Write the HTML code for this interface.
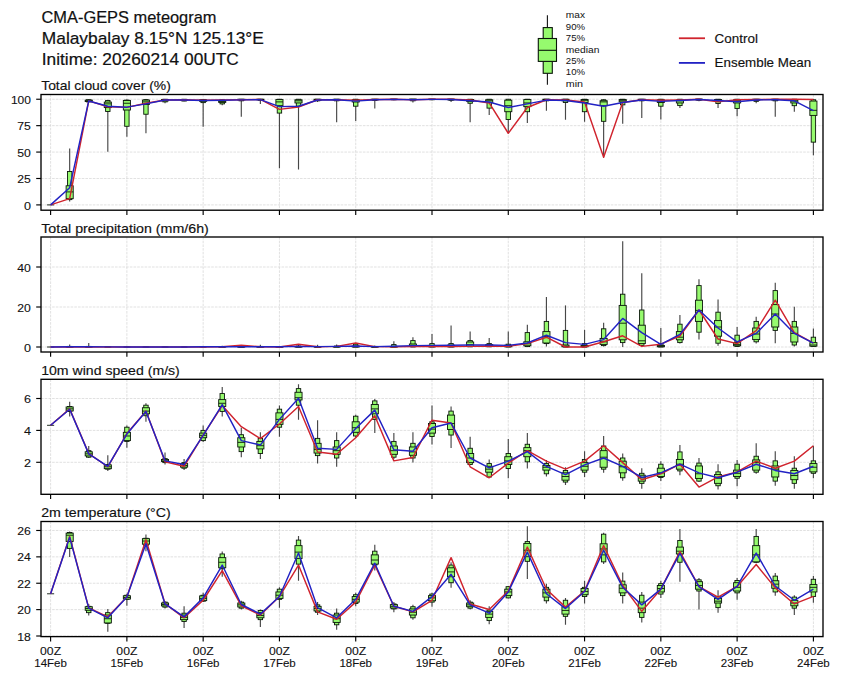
<!DOCTYPE html>
<html><head><meta charset="utf-8"><style>
html,body{margin:0;padding:0;background:#fff;}
svg{display:block;font-family:"Liberation Sans", sans-serif;}
</style></head><body>
<svg width="841" height="680" viewBox="0 0 841 680">
<rect width="841" height="680" fill="#fff"/>
<text x="41.5" y="22.9" font-size="16.1" text-anchor="start" fill="#111" stroke="#111" stroke-width="0.2" textLength="175" lengthAdjust="spacingAndGlyphs">CMA-GEPS meteogram</text>
<text x="41.8" y="43.7" font-size="16.1" text-anchor="start" fill="#111" stroke="#111" stroke-width="0.2" textLength="222" lengthAdjust="spacingAndGlyphs">Malaybalay 8.15°N 125.13°E</text>
<text x="41.8" y="64.7" font-size="16.1" text-anchor="start" fill="#111" stroke="#111" stroke-width="0.2" textLength="197" lengthAdjust="spacingAndGlyphs">Initime: 20260214 00UTC</text>
<line x1="547.4" y1="15.3" x2="547.4" y2="84.7" stroke="#111" stroke-width="1.1"/>
<rect x="543.2" y="27.6" width="9.1" height="45.7" fill="#96fa6e" stroke="#0a160a" stroke-width="1.1"/>
<rect x="538.3" y="38.5" width="18.2" height="22.9" fill="#96fa6e" stroke="#0a160a" stroke-width="1.1"/>
<line x1="538.3" y1="50.3" x2="556.5" y2="50.3" stroke="#0a160a" stroke-width="1.1"/>
<text x="565.8" y="18.4" font-size="9.3" text-anchor="start" fill="#111" textLength="19.2" lengthAdjust="spacingAndGlyphs">max</text>
<text x="565.8" y="29.78" font-size="9.3" text-anchor="start" fill="#111" textLength="19.2" lengthAdjust="spacingAndGlyphs">90%</text>
<text x="565.8" y="41.16" font-size="9.3" text-anchor="start" fill="#111" textLength="19.2" lengthAdjust="spacingAndGlyphs">75%</text>
<text x="565.8" y="52.54" font-size="9.3" text-anchor="start" fill="#111" textLength="33.6" lengthAdjust="spacingAndGlyphs">median</text>
<text x="565.8" y="63.92" font-size="9.3" text-anchor="start" fill="#111" textLength="19.2" lengthAdjust="spacingAndGlyphs">25%</text>
<text x="565.8" y="75.3" font-size="9.3" text-anchor="start" fill="#111" textLength="19.2" lengthAdjust="spacingAndGlyphs">10%</text>
<text x="565.8" y="86.68" font-size="9.3" text-anchor="start" fill="#111" textLength="17.3" lengthAdjust="spacingAndGlyphs">min</text>
<line x1="678.9" y1="38.25" x2="705" y2="38.25" stroke="#d0242e" stroke-width="1.8"/>
<line x1="678.9" y1="62.9" x2="705" y2="62.9" stroke="#2222c4" stroke-width="1.8"/>
<text x="714.6" y="42.6" font-size="13" text-anchor="start" fill="#111" stroke="#111" stroke-width="0.15" textLength="43.3" lengthAdjust="spacingAndGlyphs">Control</text>
<text x="714.6" y="66.9" font-size="13" text-anchor="start" fill="#111" stroke="#111" stroke-width="0.15" textLength="96.6" lengthAdjust="spacingAndGlyphs">Ensemble Mean</text>
<text x="41.2" y="89.8" font-size="12.9" text-anchor="start" fill="#111" stroke="#111" stroke-width="0.15" textLength="129.6" lengthAdjust="spacingAndGlyphs">Total cloud cover (%)</text>
<clipPath id="c94"><rect x="41" y="94.5" width="782" height="115.7"/></clipPath>
<g clip-path="url(#c94)">
<line x1="50.6" y1="94.5" x2="50.6" y2="210.2" stroke="#d4d4d4" stroke-width="0.7" stroke-dasharray="2.6,1.1"/>
<line x1="126.88" y1="94.5" x2="126.88" y2="210.2" stroke="#d4d4d4" stroke-width="0.7" stroke-dasharray="2.6,1.1"/>
<line x1="203.16" y1="94.5" x2="203.16" y2="210.2" stroke="#d4d4d4" stroke-width="0.7" stroke-dasharray="2.6,1.1"/>
<line x1="279.44" y1="94.5" x2="279.44" y2="210.2" stroke="#d4d4d4" stroke-width="0.7" stroke-dasharray="2.6,1.1"/>
<line x1="355.72" y1="94.5" x2="355.72" y2="210.2" stroke="#d4d4d4" stroke-width="0.7" stroke-dasharray="2.6,1.1"/>
<line x1="432" y1="94.5" x2="432" y2="210.2" stroke="#d4d4d4" stroke-width="0.7" stroke-dasharray="2.6,1.1"/>
<line x1="508.28" y1="94.5" x2="508.28" y2="210.2" stroke="#d4d4d4" stroke-width="0.7" stroke-dasharray="2.6,1.1"/>
<line x1="584.56" y1="94.5" x2="584.56" y2="210.2" stroke="#d4d4d4" stroke-width="0.7" stroke-dasharray="2.6,1.1"/>
<line x1="660.84" y1="94.5" x2="660.84" y2="210.2" stroke="#d4d4d4" stroke-width="0.7" stroke-dasharray="2.6,1.1"/>
<line x1="737.12" y1="94.5" x2="737.12" y2="210.2" stroke="#d4d4d4" stroke-width="0.7" stroke-dasharray="2.6,1.1"/>
<line x1="813.4" y1="94.5" x2="813.4" y2="210.2" stroke="#d4d4d4" stroke-width="0.7" stroke-dasharray="2.6,1.1"/>
<line x1="41" y1="204.9" x2="823" y2="204.9" stroke="#d4d4d4" stroke-width="0.7" stroke-dasharray="2.6,1.1"/>
<line x1="41" y1="178.49" x2="823" y2="178.49" stroke="#d4d4d4" stroke-width="0.7" stroke-dasharray="2.6,1.1"/>
<line x1="41" y1="152.07" x2="823" y2="152.07" stroke="#d4d4d4" stroke-width="0.7" stroke-dasharray="2.6,1.1"/>
<line x1="41" y1="125.66" x2="823" y2="125.66" stroke="#d4d4d4" stroke-width="0.7" stroke-dasharray="2.6,1.1"/>
<line x1="41" y1="99.24" x2="823" y2="99.24" stroke="#d4d4d4" stroke-width="0.7" stroke-dasharray="2.6,1.1"/>
<line x1="50.6" y1="204.9" x2="50.6" y2="204.9" stroke="#474747" stroke-width="1.15"/>
<rect x="48.4" y="204.9" width="4.4" height="0" fill="#96fa6e" stroke="#0a160a" stroke-width="0.9"/>
<rect x="47.05" y="204.9" width="7.1" height="0" fill="#96fa6e" stroke="#0a160a" stroke-width="0.9"/>
<line x1="47.05" y1="204.9" x2="54.15" y2="204.9" stroke="#0a160a" stroke-width="0.9"/>
<line x1="69.67" y1="148.58" x2="69.67" y2="201.52" stroke="#474747" stroke-width="1.15"/>
<rect x="67.47" y="171.51" width="4.4" height="28.11" fill="#96fa6e" stroke="#0a160a" stroke-width="0.9"/>
<rect x="66.12" y="185.78" width="7.1" height="12.89" fill="#96fa6e" stroke="#0a160a" stroke-width="0.9"/>
<line x1="66.12" y1="191.9" x2="73.22" y2="191.9" stroke="#0a160a" stroke-width="0.9"/>
<line x1="88.74" y1="99.24" x2="88.74" y2="102.41" stroke="#474747" stroke-width="1.15"/>
<rect x="86.54" y="99.77" width="4.4" height="2.11" fill="#96fa6e" stroke="#0a160a" stroke-width="0.9"/>
<rect x="85.19" y="100.09" width="7.1" height="1.48" fill="#96fa6e" stroke="#0a160a" stroke-width="0.9"/>
<line x1="85.19" y1="100.82" x2="92.29" y2="100.82" stroke="#0a160a" stroke-width="0.9"/>
<line x1="107.81" y1="99.77" x2="107.81" y2="151.65" stroke="#474747" stroke-width="1.15"/>
<rect x="105.61" y="100.51" width="4.4" height="10.99" fill="#96fa6e" stroke="#0a160a" stroke-width="0.9"/>
<rect x="104.26" y="102.09" width="7.1" height="5.49" fill="#96fa6e" stroke="#0a160a" stroke-width="0.9"/>
<line x1="104.26" y1="103.89" x2="111.36" y2="103.89" stroke="#0a160a" stroke-width="0.9"/>
<line x1="126.88" y1="99.56" x2="126.88" y2="136.64" stroke="#474747" stroke-width="1.15"/>
<rect x="124.68" y="100.09" width="4.4" height="26.2" fill="#96fa6e" stroke="#0a160a" stroke-width="0.9"/>
<rect x="123.33" y="100.51" width="7.1" height="9.51" fill="#96fa6e" stroke="#0a160a" stroke-width="0.9"/>
<line x1="123.33" y1="103.26" x2="130.43" y2="103.26" stroke="#0a160a" stroke-width="0.9"/>
<line x1="145.95" y1="99.24" x2="145.95" y2="133.37" stroke="#474747" stroke-width="1.15"/>
<rect x="143.75" y="99.66" width="4.4" height="14.58" fill="#96fa6e" stroke="#0a160a" stroke-width="0.9"/>
<rect x="142.4" y="100.09" width="7.1" height="4.33" fill="#96fa6e" stroke="#0a160a" stroke-width="0.9"/>
<line x1="142.4" y1="101.88" x2="149.5" y2="101.88" stroke="#0a160a" stroke-width="0.9"/>
<line x1="165.02" y1="99.24" x2="165.02" y2="103.26" stroke="#474747" stroke-width="1.15"/>
<rect x="162.82" y="99.24" width="4.4" height="2.64" fill="#96fa6e" stroke="#0a160a" stroke-width="0.9"/>
<rect x="161.47" y="99.56" width="7.1" height="1.27" fill="#96fa6e" stroke="#0a160a" stroke-width="0.9"/>
<line x1="161.47" y1="100.09" x2="168.57" y2="100.09" stroke="#0a160a" stroke-width="0.9"/>
<line x1="184.09" y1="99.24" x2="184.09" y2="101.35" stroke="#474747" stroke-width="1.15"/>
<rect x="181.89" y="99.24" width="4.4" height="1.8" fill="#96fa6e" stroke="#0a160a" stroke-width="0.9"/>
<rect x="180.54" y="99.45" width="7.1" height="0.85" fill="#96fa6e" stroke="#0a160a" stroke-width="0.9"/>
<line x1="180.54" y1="99.77" x2="187.64" y2="99.77" stroke="#0a160a" stroke-width="0.9"/>
<line x1="203.16" y1="99.24" x2="203.16" y2="126.82" stroke="#474747" stroke-width="1.15"/>
<rect x="200.96" y="99.45" width="4.4" height="3.17" fill="#96fa6e" stroke="#0a160a" stroke-width="0.9"/>
<rect x="199.61" y="99.77" width="7.1" height="1.58" fill="#96fa6e" stroke="#0a160a" stroke-width="0.9"/>
<line x1="199.61" y1="100.3" x2="206.71" y2="100.3" stroke="#0a160a" stroke-width="0.9"/>
<line x1="222.23" y1="99.24" x2="222.23" y2="105.26" stroke="#474747" stroke-width="1.15"/>
<rect x="220.03" y="99.77" width="4.4" height="4.12" fill="#96fa6e" stroke="#0a160a" stroke-width="0.9"/>
<rect x="218.68" y="100.93" width="7.1" height="1.48" fill="#96fa6e" stroke="#0a160a" stroke-width="0.9"/>
<line x1="218.68" y1="101.35" x2="225.78" y2="101.35" stroke="#0a160a" stroke-width="0.9"/>
<line x1="241.3" y1="99.24" x2="241.3" y2="116.78" stroke="#474747" stroke-width="1.15"/>
<rect x="239.1" y="99.24" width="4.4" height="1.58" fill="#96fa6e" stroke="#0a160a" stroke-width="0.9"/>
<rect x="237.75" y="99.24" width="7.1" height="0.74" fill="#96fa6e" stroke="#0a160a" stroke-width="0.9"/>
<line x1="237.75" y1="99.56" x2="244.85" y2="99.56" stroke="#0a160a" stroke-width="0.9"/>
<line x1="260.37" y1="99.24" x2="260.37" y2="103.89" stroke="#474747" stroke-width="1.15"/>
<rect x="258.17" y="99.24" width="4.4" height="1.06" fill="#96fa6e" stroke="#0a160a" stroke-width="0.9"/>
<rect x="256.82" y="99.24" width="7.1" height="0.53" fill="#96fa6e" stroke="#0a160a" stroke-width="0.9"/>
<line x1="256.82" y1="99.45" x2="263.92" y2="99.45" stroke="#0a160a" stroke-width="0.9"/>
<line x1="279.44" y1="99.24" x2="279.44" y2="168.24" stroke="#474747" stroke-width="1.15"/>
<rect x="277.24" y="99.24" width="4.4" height="13.84" fill="#96fa6e" stroke="#0a160a" stroke-width="0.9"/>
<rect x="275.89" y="99.56" width="7.1" height="6.13" fill="#96fa6e" stroke="#0a160a" stroke-width="0.9"/>
<line x1="275.89" y1="101.88" x2="282.99" y2="101.88" stroke="#0a160a" stroke-width="0.9"/>
<line x1="298.51" y1="99.24" x2="298.51" y2="169.61" stroke="#474747" stroke-width="1.15"/>
<rect x="296.31" y="99.24" width="4.4" height="6.97" fill="#96fa6e" stroke="#0a160a" stroke-width="0.9"/>
<rect x="294.96" y="99.77" width="7.1" height="3.17" fill="#96fa6e" stroke="#0a160a" stroke-width="0.9"/>
<line x1="294.96" y1="100.82" x2="302.06" y2="100.82" stroke="#0a160a" stroke-width="0.9"/>
<line x1="317.58" y1="99.24" x2="317.58" y2="101.99" stroke="#474747" stroke-width="1.15"/>
<rect x="315.38" y="99.24" width="4.4" height="1.58" fill="#96fa6e" stroke="#0a160a" stroke-width="0.9"/>
<rect x="314.03" y="99.24" width="7.1" height="1.06" fill="#96fa6e" stroke="#0a160a" stroke-width="0.9"/>
<line x1="314.03" y1="99.77" x2="321.13" y2="99.77" stroke="#0a160a" stroke-width="0.9"/>
<line x1="336.65" y1="99.24" x2="336.65" y2="122.27" stroke="#474747" stroke-width="1.15"/>
<rect x="334.45" y="99.24" width="4.4" height="1.58" fill="#96fa6e" stroke="#0a160a" stroke-width="0.9"/>
<rect x="333.1" y="99.24" width="7.1" height="0.85" fill="#96fa6e" stroke="#0a160a" stroke-width="0.9"/>
<line x1="333.1" y1="99.56" x2="340.2" y2="99.56" stroke="#0a160a" stroke-width="0.9"/>
<line x1="355.72" y1="99.24" x2="355.72" y2="121.01" stroke="#474747" stroke-width="1.15"/>
<rect x="353.52" y="99.24" width="4.4" height="6.97" fill="#96fa6e" stroke="#0a160a" stroke-width="0.9"/>
<rect x="352.17" y="99.77" width="7.1" height="2.22" fill="#96fa6e" stroke="#0a160a" stroke-width="0.9"/>
<line x1="352.17" y1="100.3" x2="359.27" y2="100.3" stroke="#0a160a" stroke-width="0.9"/>
<line x1="374.79" y1="99.24" x2="374.79" y2="108.43" stroke="#474747" stroke-width="1.15"/>
<rect x="372.59" y="99.24" width="4.4" height="1.27" fill="#96fa6e" stroke="#0a160a" stroke-width="0.9"/>
<rect x="371.24" y="99.24" width="7.1" height="0.63" fill="#96fa6e" stroke="#0a160a" stroke-width="0.9"/>
<line x1="371.24" y1="99.45" x2="378.34" y2="99.45" stroke="#0a160a" stroke-width="0.9"/>
<line x1="393.86" y1="99.24" x2="393.86" y2="100.3" stroke="#474747" stroke-width="1.15"/>
<rect x="391.66" y="99.24" width="4.4" height="0.53" fill="#96fa6e" stroke="#0a160a" stroke-width="0.9"/>
<rect x="390.31" y="99.24" width="7.1" height="0.21" fill="#96fa6e" stroke="#0a160a" stroke-width="0.9"/>
<line x1="390.31" y1="99.24" x2="397.41" y2="99.24" stroke="#0a160a" stroke-width="0.9"/>
<line x1="412.93" y1="99.24" x2="412.93" y2="102.41" stroke="#474747" stroke-width="1.15"/>
<rect x="410.73" y="99.24" width="4.4" height="1.58" fill="#96fa6e" stroke="#0a160a" stroke-width="0.9"/>
<rect x="409.38" y="99.24" width="7.1" height="0.53" fill="#96fa6e" stroke="#0a160a" stroke-width="0.9"/>
<line x1="409.38" y1="99.24" x2="416.48" y2="99.24" stroke="#0a160a" stroke-width="0.9"/>
<line x1="432" y1="99.24" x2="432" y2="100.3" stroke="#474747" stroke-width="1.15"/>
<rect x="429.8" y="99.24" width="4.4" height="0.53" fill="#96fa6e" stroke="#0a160a" stroke-width="0.9"/>
<rect x="428.45" y="99.24" width="7.1" height="0.21" fill="#96fa6e" stroke="#0a160a" stroke-width="0.9"/>
<line x1="428.45" y1="99.24" x2="435.55" y2="99.24" stroke="#0a160a" stroke-width="0.9"/>
<line x1="451.07" y1="99.24" x2="451.07" y2="101.88" stroke="#474747" stroke-width="1.15"/>
<rect x="448.87" y="99.24" width="4.4" height="1.06" fill="#96fa6e" stroke="#0a160a" stroke-width="0.9"/>
<rect x="447.52" y="99.24" width="7.1" height="0.53" fill="#96fa6e" stroke="#0a160a" stroke-width="0.9"/>
<line x1="447.52" y1="99.24" x2="454.62" y2="99.24" stroke="#0a160a" stroke-width="0.9"/>
<line x1="470.14" y1="99.24" x2="470.14" y2="122.27" stroke="#474747" stroke-width="1.15"/>
<rect x="467.94" y="99.24" width="4.4" height="4.02" fill="#96fa6e" stroke="#0a160a" stroke-width="0.9"/>
<rect x="466.59" y="99.45" width="7.1" height="1.9" fill="#96fa6e" stroke="#0a160a" stroke-width="0.9"/>
<line x1="466.59" y1="99.98" x2="473.69" y2="99.98" stroke="#0a160a" stroke-width="0.9"/>
<line x1="489.21" y1="99.24" x2="489.21" y2="114.88" stroke="#474747" stroke-width="1.15"/>
<rect x="487.01" y="99.24" width="4.4" height="8.88" fill="#96fa6e" stroke="#0a160a" stroke-width="0.9"/>
<rect x="485.66" y="99.77" width="7.1" height="2.75" fill="#96fa6e" stroke="#0a160a" stroke-width="0.9"/>
<line x1="485.66" y1="100.82" x2="492.76" y2="100.82" stroke="#0a160a" stroke-width="0.9"/>
<line x1="508.28" y1="99.24" x2="508.28" y2="133.26" stroke="#474747" stroke-width="1.15"/>
<rect x="506.08" y="99.24" width="4.4" height="20.29" fill="#96fa6e" stroke="#0a160a" stroke-width="0.9"/>
<rect x="504.73" y="100.19" width="7.1" height="11.52" fill="#96fa6e" stroke="#0a160a" stroke-width="0.9"/>
<line x1="504.73" y1="105.69" x2="511.83" y2="105.69" stroke="#0a160a" stroke-width="0.9"/>
<line x1="527.35" y1="99.24" x2="527.35" y2="123.12" stroke="#474747" stroke-width="1.15"/>
<rect x="525.15" y="99.24" width="4.4" height="12.47" fill="#96fa6e" stroke="#0a160a" stroke-width="0.9"/>
<rect x="523.8" y="99.56" width="7.1" height="7.08" fill="#96fa6e" stroke="#0a160a" stroke-width="0.9"/>
<line x1="523.8" y1="102.94" x2="530.9" y2="102.94" stroke="#0a160a" stroke-width="0.9"/>
<line x1="546.42" y1="99.24" x2="546.42" y2="110.65" stroke="#474747" stroke-width="1.15"/>
<rect x="544.22" y="99.24" width="4.4" height="1.58" fill="#96fa6e" stroke="#0a160a" stroke-width="0.9"/>
<rect x="542.87" y="99.24" width="7.1" height="0.74" fill="#96fa6e" stroke="#0a160a" stroke-width="0.9"/>
<line x1="542.87" y1="99.45" x2="549.97" y2="99.45" stroke="#0a160a" stroke-width="0.9"/>
<line x1="565.49" y1="99.24" x2="565.49" y2="119.84" stroke="#474747" stroke-width="1.15"/>
<rect x="563.29" y="99.24" width="4.4" height="3.28" fill="#96fa6e" stroke="#0a160a" stroke-width="0.9"/>
<rect x="561.94" y="99.24" width="7.1" height="1.58" fill="#96fa6e" stroke="#0a160a" stroke-width="0.9"/>
<line x1="561.94" y1="99.87" x2="569.04" y2="99.87" stroke="#0a160a" stroke-width="0.9"/>
<line x1="584.56" y1="99.24" x2="584.56" y2="121.75" stroke="#474747" stroke-width="1.15"/>
<rect x="582.36" y="99.24" width="4.4" height="12.47" fill="#96fa6e" stroke="#0a160a" stroke-width="0.9"/>
<rect x="581.01" y="99.56" width="7.1" height="2.85" fill="#96fa6e" stroke="#0a160a" stroke-width="0.9"/>
<line x1="581.01" y1="100.3" x2="588.11" y2="100.3" stroke="#0a160a" stroke-width="0.9"/>
<line x1="603.63" y1="99.24" x2="603.63" y2="157.25" stroke="#474747" stroke-width="1.15"/>
<rect x="601.43" y="99.77" width="4.4" height="21.55" fill="#96fa6e" stroke="#0a160a" stroke-width="0.9"/>
<rect x="600.08" y="100.72" width="7.1" height="4.97" fill="#96fa6e" stroke="#0a160a" stroke-width="0.9"/>
<line x1="600.08" y1="101.88" x2="607.18" y2="101.88" stroke="#0a160a" stroke-width="0.9"/>
<line x1="622.7" y1="99.24" x2="622.7" y2="123.75" stroke="#474747" stroke-width="1.15"/>
<rect x="620.5" y="99.24" width="4.4" height="5.6" fill="#96fa6e" stroke="#0a160a" stroke-width="0.9"/>
<rect x="619.15" y="99.56" width="7.1" height="2.32" fill="#96fa6e" stroke="#0a160a" stroke-width="0.9"/>
<line x1="619.15" y1="100.3" x2="626.25" y2="100.3" stroke="#0a160a" stroke-width="0.9"/>
<line x1="641.77" y1="99.24" x2="641.77" y2="118.05" stroke="#474747" stroke-width="1.15"/>
<rect x="639.57" y="99.24" width="4.4" height="1.58" fill="#96fa6e" stroke="#0a160a" stroke-width="0.9"/>
<rect x="638.22" y="99.24" width="7.1" height="0.74" fill="#96fa6e" stroke="#0a160a" stroke-width="0.9"/>
<line x1="638.22" y1="99.56" x2="645.32" y2="99.56" stroke="#0a160a" stroke-width="0.9"/>
<line x1="660.84" y1="99.24" x2="660.84" y2="119.53" stroke="#474747" stroke-width="1.15"/>
<rect x="658.64" y="99.24" width="4.4" height="6.97" fill="#96fa6e" stroke="#0a160a" stroke-width="0.9"/>
<rect x="657.29" y="99.77" width="7.1" height="2.75" fill="#96fa6e" stroke="#0a160a" stroke-width="0.9"/>
<line x1="657.29" y1="100.82" x2="664.39" y2="100.82" stroke="#0a160a" stroke-width="0.9"/>
<line x1="679.91" y1="99.24" x2="679.91" y2="107.9" stroke="#474747" stroke-width="1.15"/>
<rect x="677.71" y="99.24" width="4.4" height="6.34" fill="#96fa6e" stroke="#0a160a" stroke-width="0.9"/>
<rect x="676.36" y="99.98" width="7.1" height="2.96" fill="#96fa6e" stroke="#0a160a" stroke-width="0.9"/>
<line x1="676.36" y1="100.82" x2="683.46" y2="100.82" stroke="#0a160a" stroke-width="0.9"/>
<line x1="698.98" y1="99.24" x2="698.98" y2="101.35" stroke="#474747" stroke-width="1.15"/>
<rect x="696.78" y="99.24" width="4.4" height="1.06" fill="#96fa6e" stroke="#0a160a" stroke-width="0.9"/>
<rect x="695.43" y="99.24" width="7.1" height="0.53" fill="#96fa6e" stroke="#0a160a" stroke-width="0.9"/>
<line x1="695.43" y1="99.24" x2="702.53" y2="99.24" stroke="#0a160a" stroke-width="0.9"/>
<line x1="718.05" y1="99.24" x2="718.05" y2="107.9" stroke="#474747" stroke-width="1.15"/>
<rect x="715.85" y="99.24" width="4.4" height="4.23" fill="#96fa6e" stroke="#0a160a" stroke-width="0.9"/>
<rect x="714.5" y="99.56" width="7.1" height="1.8" fill="#96fa6e" stroke="#0a160a" stroke-width="0.9"/>
<line x1="714.5" y1="100.09" x2="721.6" y2="100.09" stroke="#0a160a" stroke-width="0.9"/>
<line x1="737.12" y1="99.24" x2="737.12" y2="116.15" stroke="#474747" stroke-width="1.15"/>
<rect x="734.92" y="99.24" width="4.4" height="9.19" fill="#96fa6e" stroke="#0a160a" stroke-width="0.9"/>
<rect x="733.57" y="99.77" width="7.1" height="3.17" fill="#96fa6e" stroke="#0a160a" stroke-width="0.9"/>
<line x1="733.57" y1="100.82" x2="740.67" y2="100.82" stroke="#0a160a" stroke-width="0.9"/>
<line x1="756.19" y1="99.24" x2="756.19" y2="103.26" stroke="#474747" stroke-width="1.15"/>
<rect x="753.99" y="99.24" width="4.4" height="2.11" fill="#96fa6e" stroke="#0a160a" stroke-width="0.9"/>
<rect x="752.64" y="99.24" width="7.1" height="1.06" fill="#96fa6e" stroke="#0a160a" stroke-width="0.9"/>
<line x1="752.64" y1="99.77" x2="759.74" y2="99.77" stroke="#0a160a" stroke-width="0.9"/>
<line x1="775.26" y1="99.24" x2="775.26" y2="116.78" stroke="#474747" stroke-width="1.15"/>
<rect x="773.06" y="99.24" width="4.4" height="1.58" fill="#96fa6e" stroke="#0a160a" stroke-width="0.9"/>
<rect x="771.71" y="99.24" width="7.1" height="0.74" fill="#96fa6e" stroke="#0a160a" stroke-width="0.9"/>
<line x1="771.71" y1="99.45" x2="778.81" y2="99.45" stroke="#0a160a" stroke-width="0.9"/>
<line x1="794.33" y1="99.24" x2="794.33" y2="111.71" stroke="#474747" stroke-width="1.15"/>
<rect x="792.13" y="99.24" width="4.4" height="6.45" fill="#96fa6e" stroke="#0a160a" stroke-width="0.9"/>
<rect x="790.78" y="99.98" width="7.1" height="2.96" fill="#96fa6e" stroke="#0a160a" stroke-width="0.9"/>
<line x1="790.78" y1="101.04" x2="797.88" y2="101.04" stroke="#0a160a" stroke-width="0.9"/>
<line x1="813.4" y1="99.24" x2="813.4" y2="155.35" stroke="#474747" stroke-width="1.15"/>
<rect x="811.2" y="99.77" width="4.4" height="42.37" fill="#96fa6e" stroke="#0a160a" stroke-width="0.9"/>
<rect x="809.85" y="101.04" width="7.1" height="14.37" fill="#96fa6e" stroke="#0a160a" stroke-width="0.9"/>
<line x1="809.85" y1="110.33" x2="816.95" y2="110.33" stroke="#0a160a" stroke-width="0.9"/>
<polyline points="50.6,204.9 69.67,198.67 88.74,100.93 107.81,106.74 126.88,107.38 145.95,103.26 165.02,99.98 184.09,99.77 203.16,100.3 222.23,100.09 241.3,99.66 260.37,99.45 279.44,109.38 298.51,106.95 317.58,99.77 336.65,99.66 355.72,100.3 374.79,99.45 393.86,99.24 412.93,99.77 432,99.24 451.07,99.24 470.14,99.98 489.21,102.94 508.28,133.26 527.35,107.48 546.42,99.77 565.49,99.98 584.56,101.99 603.63,157.25 622.7,102.52 641.77,99.77 660.84,100.3 679.91,99.98 698.98,99.24 718.05,101.88 737.12,99.77 756.19,99.56 775.26,99.24 794.33,99.24 813.4,99.56" fill="none" stroke="#d0242e" stroke-width="1.45" stroke-linejoin="round"/>
<polyline points="50.6,204.9 69.67,187.68 88.74,100.93 107.81,106.21 126.88,107.16 145.95,103.89 165.02,99.98 184.09,99.98 203.16,100.51 222.23,100.3 241.3,99.87 260.37,99.66 279.44,106.64 298.51,106.21 317.58,99.98 336.65,99.77 355.72,101.14 374.79,99.66 393.86,99.35 412.93,99.66 432,99.35 451.07,99.45 470.14,100.72 489.21,101.99 508.28,107.48 527.35,103.89 546.42,100.09 565.49,100.51 584.56,102.94 603.63,106.21 622.7,102.52 641.77,100.09 660.84,101.35 679.91,100.51 698.98,99.45 718.05,100.51 737.12,101.78 756.19,99.98 775.26,99.66 794.33,100.82 813.4,110.65" fill="none" stroke="#2222c4" stroke-width="1.45" stroke-linejoin="round"/>
</g>
<rect x="41" y="94.5" width="782" height="115.7" fill="none" stroke="#000" stroke-width="1.35"/>
<line x1="36.2" y1="204.9" x2="41" y2="204.9" stroke="#000" stroke-width="1.15"/>
<text x="30.9" y="209.5" font-size="11.6" text-anchor="end" fill="#111" stroke="#111" stroke-width="0.1" textLength="7" lengthAdjust="spacingAndGlyphs">0</text>
<line x1="36.2" y1="178.49" x2="41" y2="178.49" stroke="#000" stroke-width="1.15"/>
<text x="30.9" y="183.09" font-size="11.6" text-anchor="end" fill="#111" stroke="#111" stroke-width="0.1" textLength="13.6" lengthAdjust="spacingAndGlyphs">25</text>
<line x1="36.2" y1="152.07" x2="41" y2="152.07" stroke="#000" stroke-width="1.15"/>
<text x="30.9" y="156.67" font-size="11.6" text-anchor="end" fill="#111" stroke="#111" stroke-width="0.1" textLength="13.6" lengthAdjust="spacingAndGlyphs">50</text>
<line x1="36.2" y1="125.66" x2="41" y2="125.66" stroke="#000" stroke-width="1.15"/>
<text x="30.9" y="130.25" font-size="11.6" text-anchor="end" fill="#111" stroke="#111" stroke-width="0.1" textLength="13.6" lengthAdjust="spacingAndGlyphs">75</text>
<line x1="36.2" y1="99.24" x2="41" y2="99.24" stroke="#000" stroke-width="1.15"/>
<text x="30.9" y="103.84" font-size="11.6" text-anchor="end" fill="#111" stroke="#111" stroke-width="0.1" textLength="20" lengthAdjust="spacingAndGlyphs">100</text>
<line x1="50.6" y1="210.2" x2="50.6" y2="215" stroke="#000" stroke-width="1.15"/>
<line x1="126.88" y1="210.2" x2="126.88" y2="215" stroke="#000" stroke-width="1.15"/>
<line x1="203.16" y1="210.2" x2="203.16" y2="215" stroke="#000" stroke-width="1.15"/>
<line x1="279.44" y1="210.2" x2="279.44" y2="215" stroke="#000" stroke-width="1.15"/>
<line x1="355.72" y1="210.2" x2="355.72" y2="215" stroke="#000" stroke-width="1.15"/>
<line x1="432" y1="210.2" x2="432" y2="215" stroke="#000" stroke-width="1.15"/>
<line x1="508.28" y1="210.2" x2="508.28" y2="215" stroke="#000" stroke-width="1.15"/>
<line x1="584.56" y1="210.2" x2="584.56" y2="215" stroke="#000" stroke-width="1.15"/>
<line x1="660.84" y1="210.2" x2="660.84" y2="215" stroke="#000" stroke-width="1.15"/>
<line x1="737.12" y1="210.2" x2="737.12" y2="215" stroke="#000" stroke-width="1.15"/>
<line x1="813.4" y1="210.2" x2="813.4" y2="215" stroke="#000" stroke-width="1.15"/>
<text x="41.2" y="232.6" font-size="12.9" text-anchor="start" fill="#111" stroke="#111" stroke-width="0.15" textLength="167.6" lengthAdjust="spacingAndGlyphs">Total precipitation (mm/6h)</text>
<clipPath id="c237"><rect x="41" y="237" width="782" height="115"/></clipPath>
<g clip-path="url(#c237)">
<line x1="50.6" y1="237" x2="50.6" y2="352" stroke="#d4d4d4" stroke-width="0.7" stroke-dasharray="2.6,1.1"/>
<line x1="126.88" y1="237" x2="126.88" y2="352" stroke="#d4d4d4" stroke-width="0.7" stroke-dasharray="2.6,1.1"/>
<line x1="203.16" y1="237" x2="203.16" y2="352" stroke="#d4d4d4" stroke-width="0.7" stroke-dasharray="2.6,1.1"/>
<line x1="279.44" y1="237" x2="279.44" y2="352" stroke="#d4d4d4" stroke-width="0.7" stroke-dasharray="2.6,1.1"/>
<line x1="355.72" y1="237" x2="355.72" y2="352" stroke="#d4d4d4" stroke-width="0.7" stroke-dasharray="2.6,1.1"/>
<line x1="432" y1="237" x2="432" y2="352" stroke="#d4d4d4" stroke-width="0.7" stroke-dasharray="2.6,1.1"/>
<line x1="508.28" y1="237" x2="508.28" y2="352" stroke="#d4d4d4" stroke-width="0.7" stroke-dasharray="2.6,1.1"/>
<line x1="584.56" y1="237" x2="584.56" y2="352" stroke="#d4d4d4" stroke-width="0.7" stroke-dasharray="2.6,1.1"/>
<line x1="660.84" y1="237" x2="660.84" y2="352" stroke="#d4d4d4" stroke-width="0.7" stroke-dasharray="2.6,1.1"/>
<line x1="737.12" y1="237" x2="737.12" y2="352" stroke="#d4d4d4" stroke-width="0.7" stroke-dasharray="2.6,1.1"/>
<line x1="813.4" y1="237" x2="813.4" y2="352" stroke="#d4d4d4" stroke-width="0.7" stroke-dasharray="2.6,1.1"/>
<line x1="41" y1="347" x2="823" y2="347" stroke="#d4d4d4" stroke-width="0.7" stroke-dasharray="2.6,1.1"/>
<line x1="41" y1="307" x2="823" y2="307" stroke="#d4d4d4" stroke-width="0.7" stroke-dasharray="2.6,1.1"/>
<line x1="41" y1="267" x2="823" y2="267" stroke="#d4d4d4" stroke-width="0.7" stroke-dasharray="2.6,1.1"/>
<line x1="50.6" y1="347" x2="50.6" y2="347" stroke="#474747" stroke-width="1.15"/>
<rect x="48.4" y="347" width="4.4" height="0" fill="#96fa6e" stroke="#0a160a" stroke-width="0.9"/>
<rect x="47.05" y="347" width="7.1" height="0" fill="#96fa6e" stroke="#0a160a" stroke-width="0.9"/>
<line x1="47.05" y1="347" x2="54.15" y2="347" stroke="#0a160a" stroke-width="0.9"/>
<line x1="69.67" y1="344.5" x2="69.67" y2="347" stroke="#474747" stroke-width="1.15"/>
<rect x="67.47" y="346.4" width="4.4" height="0.6" fill="#96fa6e" stroke="#0a160a" stroke-width="0.9"/>
<rect x="66.12" y="346.8" width="7.1" height="0.2" fill="#96fa6e" stroke="#0a160a" stroke-width="0.9"/>
<line x1="66.12" y1="347" x2="73.22" y2="347" stroke="#0a160a" stroke-width="0.9"/>
<line x1="88.74" y1="343" x2="88.74" y2="347" stroke="#474747" stroke-width="1.15"/>
<rect x="86.54" y="346.4" width="4.4" height="0.6" fill="#96fa6e" stroke="#0a160a" stroke-width="0.9"/>
<rect x="85.19" y="346.8" width="7.1" height="0.2" fill="#96fa6e" stroke="#0a160a" stroke-width="0.9"/>
<line x1="85.19" y1="347" x2="92.29" y2="347" stroke="#0a160a" stroke-width="0.9"/>
<line x1="107.81" y1="346.4" x2="107.81" y2="347" stroke="#474747" stroke-width="1.15"/>
<rect x="105.61" y="346.8" width="4.4" height="0.2" fill="#96fa6e" stroke="#0a160a" stroke-width="0.9"/>
<rect x="104.26" y="347" width="7.1" height="0" fill="#96fa6e" stroke="#0a160a" stroke-width="0.9"/>
<line x1="104.26" y1="347" x2="111.36" y2="347" stroke="#0a160a" stroke-width="0.9"/>
<line x1="126.88" y1="346.4" x2="126.88" y2="347" stroke="#474747" stroke-width="1.15"/>
<rect x="124.68" y="346.8" width="4.4" height="0.2" fill="#96fa6e" stroke="#0a160a" stroke-width="0.9"/>
<rect x="123.33" y="347" width="7.1" height="0" fill="#96fa6e" stroke="#0a160a" stroke-width="0.9"/>
<line x1="123.33" y1="347" x2="130.43" y2="347" stroke="#0a160a" stroke-width="0.9"/>
<line x1="145.95" y1="346.4" x2="145.95" y2="347" stroke="#474747" stroke-width="1.15"/>
<rect x="143.75" y="346.8" width="4.4" height="0.2" fill="#96fa6e" stroke="#0a160a" stroke-width="0.9"/>
<rect x="142.4" y="347" width="7.1" height="0" fill="#96fa6e" stroke="#0a160a" stroke-width="0.9"/>
<line x1="142.4" y1="347" x2="149.5" y2="347" stroke="#0a160a" stroke-width="0.9"/>
<line x1="165.02" y1="346.2" x2="165.02" y2="347" stroke="#474747" stroke-width="1.15"/>
<rect x="162.82" y="346.8" width="4.4" height="0.2" fill="#96fa6e" stroke="#0a160a" stroke-width="0.9"/>
<rect x="161.47" y="347" width="7.1" height="0" fill="#96fa6e" stroke="#0a160a" stroke-width="0.9"/>
<line x1="161.47" y1="347" x2="168.57" y2="347" stroke="#0a160a" stroke-width="0.9"/>
<line x1="184.09" y1="346.4" x2="184.09" y2="347" stroke="#474747" stroke-width="1.15"/>
<rect x="181.89" y="346.8" width="4.4" height="0.2" fill="#96fa6e" stroke="#0a160a" stroke-width="0.9"/>
<rect x="180.54" y="347" width="7.1" height="0" fill="#96fa6e" stroke="#0a160a" stroke-width="0.9"/>
<line x1="180.54" y1="347" x2="187.64" y2="347" stroke="#0a160a" stroke-width="0.9"/>
<line x1="203.16" y1="346" x2="203.16" y2="347" stroke="#474747" stroke-width="1.15"/>
<rect x="200.96" y="346.8" width="4.4" height="0.2" fill="#96fa6e" stroke="#0a160a" stroke-width="0.9"/>
<rect x="199.61" y="347" width="7.1" height="0" fill="#96fa6e" stroke="#0a160a" stroke-width="0.9"/>
<line x1="199.61" y1="347" x2="206.71" y2="347" stroke="#0a160a" stroke-width="0.9"/>
<line x1="222.23" y1="345.8" x2="222.23" y2="347" stroke="#474747" stroke-width="1.15"/>
<rect x="220.03" y="346.6" width="4.4" height="0.4" fill="#96fa6e" stroke="#0a160a" stroke-width="0.9"/>
<rect x="218.68" y="346.8" width="7.1" height="0.2" fill="#96fa6e" stroke="#0a160a" stroke-width="0.9"/>
<line x1="218.68" y1="347" x2="225.78" y2="347" stroke="#0a160a" stroke-width="0.9"/>
<line x1="241.3" y1="345.8" x2="241.3" y2="347" stroke="#474747" stroke-width="1.15"/>
<rect x="239.1" y="346.6" width="4.4" height="0.4" fill="#96fa6e" stroke="#0a160a" stroke-width="0.9"/>
<rect x="237.75" y="346.8" width="7.1" height="0.2" fill="#96fa6e" stroke="#0a160a" stroke-width="0.9"/>
<line x1="237.75" y1="347" x2="244.85" y2="347" stroke="#0a160a" stroke-width="0.9"/>
<line x1="260.37" y1="344.8" x2="260.37" y2="347" stroke="#474747" stroke-width="1.15"/>
<rect x="258.17" y="346.4" width="4.4" height="0.6" fill="#96fa6e" stroke="#0a160a" stroke-width="0.9"/>
<rect x="256.82" y="346.8" width="7.1" height="0.2" fill="#96fa6e" stroke="#0a160a" stroke-width="0.9"/>
<line x1="256.82" y1="347" x2="263.92" y2="347" stroke="#0a160a" stroke-width="0.9"/>
<line x1="279.44" y1="346" x2="279.44" y2="347" stroke="#474747" stroke-width="1.15"/>
<rect x="277.24" y="346.6" width="4.4" height="0.4" fill="#96fa6e" stroke="#0a160a" stroke-width="0.9"/>
<rect x="275.89" y="346.8" width="7.1" height="0.2" fill="#96fa6e" stroke="#0a160a" stroke-width="0.9"/>
<line x1="275.89" y1="347" x2="282.99" y2="347" stroke="#0a160a" stroke-width="0.9"/>
<line x1="298.51" y1="344" x2="298.51" y2="347" stroke="#474747" stroke-width="1.15"/>
<rect x="296.31" y="346" width="4.4" height="1" fill="#96fa6e" stroke="#0a160a" stroke-width="0.9"/>
<rect x="294.96" y="346.6" width="7.1" height="0.4" fill="#96fa6e" stroke="#0a160a" stroke-width="0.9"/>
<line x1="294.96" y1="346.8" x2="302.06" y2="346.8" stroke="#0a160a" stroke-width="0.9"/>
<line x1="317.58" y1="344.8" x2="317.58" y2="347" stroke="#474747" stroke-width="1.15"/>
<rect x="315.38" y="346.4" width="4.4" height="0.6" fill="#96fa6e" stroke="#0a160a" stroke-width="0.9"/>
<rect x="314.03" y="346.8" width="7.1" height="0.2" fill="#96fa6e" stroke="#0a160a" stroke-width="0.9"/>
<line x1="314.03" y1="347" x2="321.13" y2="347" stroke="#0a160a" stroke-width="0.9"/>
<line x1="336.65" y1="344.4" x2="336.65" y2="347" stroke="#474747" stroke-width="1.15"/>
<rect x="334.45" y="346" width="4.4" height="1" fill="#96fa6e" stroke="#0a160a" stroke-width="0.9"/>
<rect x="333.1" y="346.6" width="7.1" height="0.4" fill="#96fa6e" stroke="#0a160a" stroke-width="0.9"/>
<line x1="333.1" y1="346.8" x2="340.2" y2="346.8" stroke="#0a160a" stroke-width="0.9"/>
<line x1="355.72" y1="343" x2="355.72" y2="347" stroke="#474747" stroke-width="1.15"/>
<rect x="353.52" y="344.2" width="4.4" height="2.8" fill="#96fa6e" stroke="#0a160a" stroke-width="0.9"/>
<rect x="352.17" y="346" width="7.1" height="1" fill="#96fa6e" stroke="#0a160a" stroke-width="0.9"/>
<line x1="352.17" y1="346.6" x2="359.27" y2="346.6" stroke="#0a160a" stroke-width="0.9"/>
<line x1="374.79" y1="345.4" x2="374.79" y2="347" stroke="#474747" stroke-width="1.15"/>
<rect x="372.59" y="346.4" width="4.4" height="0.6" fill="#96fa6e" stroke="#0a160a" stroke-width="0.9"/>
<rect x="371.24" y="346.8" width="7.1" height="0.2" fill="#96fa6e" stroke="#0a160a" stroke-width="0.9"/>
<line x1="371.24" y1="347" x2="378.34" y2="347" stroke="#0a160a" stroke-width="0.9"/>
<line x1="393.86" y1="341.2" x2="393.86" y2="347" stroke="#474747" stroke-width="1.15"/>
<rect x="391.66" y="344.6" width="4.4" height="2.4" fill="#96fa6e" stroke="#0a160a" stroke-width="0.9"/>
<rect x="390.31" y="346.4" width="7.1" height="0.6" fill="#96fa6e" stroke="#0a160a" stroke-width="0.9"/>
<line x1="390.31" y1="346.8" x2="397.41" y2="346.8" stroke="#0a160a" stroke-width="0.9"/>
<line x1="412.93" y1="337.2" x2="412.93" y2="347" stroke="#474747" stroke-width="1.15"/>
<rect x="410.73" y="340.6" width="4.4" height="6.4" fill="#96fa6e" stroke="#0a160a" stroke-width="0.9"/>
<rect x="409.38" y="344" width="7.1" height="2.4" fill="#96fa6e" stroke="#0a160a" stroke-width="0.9"/>
<line x1="409.38" y1="345.4" x2="416.48" y2="345.4" stroke="#0a160a" stroke-width="0.9"/>
<line x1="432" y1="334" x2="432" y2="347" stroke="#474747" stroke-width="1.15"/>
<rect x="429.8" y="343.6" width="4.4" height="3.4" fill="#96fa6e" stroke="#0a160a" stroke-width="0.9"/>
<rect x="428.45" y="345.4" width="7.1" height="1.4" fill="#96fa6e" stroke="#0a160a" stroke-width="0.9"/>
<line x1="428.45" y1="346.4" x2="435.55" y2="346.4" stroke="#0a160a" stroke-width="0.9"/>
<line x1="451.07" y1="325.6" x2="451.07" y2="347" stroke="#474747" stroke-width="1.15"/>
<rect x="448.87" y="343.6" width="4.4" height="3.4" fill="#96fa6e" stroke="#0a160a" stroke-width="0.9"/>
<rect x="447.52" y="345.2" width="7.1" height="1.6" fill="#96fa6e" stroke="#0a160a" stroke-width="0.9"/>
<line x1="447.52" y1="346.2" x2="454.62" y2="346.2" stroke="#0a160a" stroke-width="0.9"/>
<line x1="470.14" y1="331.4" x2="470.14" y2="347" stroke="#474747" stroke-width="1.15"/>
<rect x="467.94" y="340.6" width="4.4" height="6.2" fill="#96fa6e" stroke="#0a160a" stroke-width="0.9"/>
<rect x="466.59" y="342" width="7.1" height="4.4" fill="#96fa6e" stroke="#0a160a" stroke-width="0.9"/>
<line x1="466.59" y1="344.6" x2="473.69" y2="344.6" stroke="#0a160a" stroke-width="0.9"/>
<line x1="489.21" y1="338" x2="489.21" y2="347" stroke="#474747" stroke-width="1.15"/>
<rect x="487.01" y="343.6" width="4.4" height="3.2" fill="#96fa6e" stroke="#0a160a" stroke-width="0.9"/>
<rect x="485.66" y="344.6" width="7.1" height="1.8" fill="#96fa6e" stroke="#0a160a" stroke-width="0.9"/>
<line x1="485.66" y1="345.8" x2="492.76" y2="345.8" stroke="#0a160a" stroke-width="0.9"/>
<line x1="508.28" y1="331.6" x2="508.28" y2="347" stroke="#474747" stroke-width="1.15"/>
<rect x="506.08" y="344.2" width="4.4" height="2.8" fill="#96fa6e" stroke="#0a160a" stroke-width="0.9"/>
<rect x="504.73" y="345.2" width="7.1" height="1.6" fill="#96fa6e" stroke="#0a160a" stroke-width="0.9"/>
<line x1="504.73" y1="346.2" x2="511.83" y2="346.2" stroke="#0a160a" stroke-width="0.9"/>
<line x1="527.35" y1="324.8" x2="527.35" y2="347" stroke="#474747" stroke-width="1.15"/>
<rect x="525.15" y="332.6" width="4.4" height="14" fill="#96fa6e" stroke="#0a160a" stroke-width="0.9"/>
<rect x="523.8" y="341.8" width="7.1" height="4" fill="#96fa6e" stroke="#0a160a" stroke-width="0.9"/>
<line x1="523.8" y1="343.8" x2="530.9" y2="343.8" stroke="#0a160a" stroke-width="0.9"/>
<line x1="546.42" y1="297" x2="546.42" y2="346.4" stroke="#474747" stroke-width="1.15"/>
<rect x="544.22" y="321.4" width="4.4" height="22.2" fill="#96fa6e" stroke="#0a160a" stroke-width="0.9"/>
<rect x="542.87" y="331.6" width="7.1" height="11.4" fill="#96fa6e" stroke="#0a160a" stroke-width="0.9"/>
<line x1="542.87" y1="336.6" x2="549.97" y2="336.6" stroke="#0a160a" stroke-width="0.9"/>
<line x1="565.49" y1="305.4" x2="565.49" y2="347" stroke="#474747" stroke-width="1.15"/>
<rect x="563.29" y="330.4" width="4.4" height="16.6" fill="#96fa6e" stroke="#0a160a" stroke-width="0.9"/>
<rect x="561.94" y="345" width="7.1" height="1.8" fill="#96fa6e" stroke="#0a160a" stroke-width="0.9"/>
<line x1="561.94" y1="346.2" x2="569.04" y2="346.2" stroke="#0a160a" stroke-width="0.9"/>
<line x1="584.56" y1="329.8" x2="584.56" y2="347" stroke="#474747" stroke-width="1.15"/>
<rect x="582.36" y="343.6" width="4.4" height="3.4" fill="#96fa6e" stroke="#0a160a" stroke-width="0.9"/>
<rect x="581.01" y="345.4" width="7.1" height="1.4" fill="#96fa6e" stroke="#0a160a" stroke-width="0.9"/>
<line x1="581.01" y1="346.4" x2="588.11" y2="346.4" stroke="#0a160a" stroke-width="0.9"/>
<line x1="603.63" y1="322.8" x2="603.63" y2="346.6" stroke="#474747" stroke-width="1.15"/>
<rect x="601.43" y="328.8" width="4.4" height="16.8" fill="#96fa6e" stroke="#0a160a" stroke-width="0.9"/>
<rect x="600.08" y="338.4" width="7.1" height="6" fill="#96fa6e" stroke="#0a160a" stroke-width="0.9"/>
<line x1="600.08" y1="341.8" x2="607.18" y2="341.8" stroke="#0a160a" stroke-width="0.9"/>
<line x1="622.7" y1="241.2" x2="622.7" y2="347" stroke="#474747" stroke-width="1.15"/>
<rect x="620.5" y="294.2" width="4.4" height="48.4" fill="#96fa6e" stroke="#0a160a" stroke-width="0.9"/>
<rect x="619.15" y="305.4" width="7.1" height="34.4" fill="#96fa6e" stroke="#0a160a" stroke-width="0.9"/>
<line x1="619.15" y1="323.2" x2="626.25" y2="323.2" stroke="#0a160a" stroke-width="0.9"/>
<line x1="641.77" y1="273.2" x2="641.77" y2="346" stroke="#474747" stroke-width="1.15"/>
<rect x="639.57" y="310" width="4.4" height="35.4" fill="#96fa6e" stroke="#0a160a" stroke-width="0.9"/>
<rect x="638.22" y="325.2" width="7.1" height="18.4" fill="#96fa6e" stroke="#0a160a" stroke-width="0.9"/>
<line x1="638.22" y1="340.8" x2="645.32" y2="340.8" stroke="#0a160a" stroke-width="0.9"/>
<line x1="660.84" y1="328" x2="660.84" y2="347" stroke="#474747" stroke-width="1.15"/>
<rect x="658.64" y="343.6" width="4.4" height="3.4" fill="#96fa6e" stroke="#0a160a" stroke-width="0.9"/>
<rect x="657.29" y="345.4" width="7.1" height="1.4" fill="#96fa6e" stroke="#0a160a" stroke-width="0.9"/>
<line x1="657.29" y1="346.2" x2="664.39" y2="346.2" stroke="#0a160a" stroke-width="0.9"/>
<line x1="679.91" y1="315" x2="679.91" y2="343.4" stroke="#474747" stroke-width="1.15"/>
<rect x="677.71" y="324.2" width="4.4" height="18.4" fill="#96fa6e" stroke="#0a160a" stroke-width="0.9"/>
<rect x="676.36" y="331.6" width="7.1" height="8.2" fill="#96fa6e" stroke="#0a160a" stroke-width="0.9"/>
<line x1="676.36" y1="337.2" x2="683.46" y2="337.2" stroke="#0a160a" stroke-width="0.9"/>
<line x1="698.98" y1="279.2" x2="698.98" y2="339.6" stroke="#474747" stroke-width="1.15"/>
<rect x="696.78" y="285.6" width="4.4" height="46.6" fill="#96fa6e" stroke="#0a160a" stroke-width="0.9"/>
<rect x="695.43" y="300.2" width="7.1" height="21.2" fill="#96fa6e" stroke="#0a160a" stroke-width="0.9"/>
<line x1="695.43" y1="310.4" x2="702.53" y2="310.4" stroke="#0a160a" stroke-width="0.9"/>
<line x1="718.05" y1="299.4" x2="718.05" y2="345.8" stroke="#474747" stroke-width="1.15"/>
<rect x="715.85" y="312.2" width="4.4" height="31" fill="#96fa6e" stroke="#0a160a" stroke-width="0.9"/>
<rect x="714.5" y="320.6" width="7.1" height="15.6" fill="#96fa6e" stroke="#0a160a" stroke-width="0.9"/>
<line x1="714.5" y1="327" x2="721.6" y2="327" stroke="#0a160a" stroke-width="0.9"/>
<line x1="737.12" y1="327" x2="737.12" y2="347" stroke="#474747" stroke-width="1.15"/>
<rect x="734.92" y="335.2" width="4.4" height="11.2" fill="#96fa6e" stroke="#0a160a" stroke-width="0.9"/>
<rect x="733.57" y="342.6" width="7.1" height="3.2" fill="#96fa6e" stroke="#0a160a" stroke-width="0.9"/>
<line x1="733.57" y1="344.6" x2="740.67" y2="344.6" stroke="#0a160a" stroke-width="0.9"/>
<line x1="756.19" y1="316.8" x2="756.19" y2="343.6" stroke="#474747" stroke-width="1.15"/>
<rect x="753.99" y="321.4" width="4.4" height="20.4" fill="#96fa6e" stroke="#0a160a" stroke-width="0.9"/>
<rect x="752.64" y="328" width="7.1" height="11.6" fill="#96fa6e" stroke="#0a160a" stroke-width="0.9"/>
<line x1="752.64" y1="334" x2="759.74" y2="334" stroke="#0a160a" stroke-width="0.9"/>
<line x1="775.26" y1="282.8" x2="775.26" y2="343.2" stroke="#474747" stroke-width="1.15"/>
<rect x="773.06" y="290.6" width="4.4" height="39.8" fill="#96fa6e" stroke="#0a160a" stroke-width="0.9"/>
<rect x="771.71" y="304.6" width="7.1" height="22.4" fill="#96fa6e" stroke="#0a160a" stroke-width="0.9"/>
<line x1="771.71" y1="314" x2="778.81" y2="314" stroke="#0a160a" stroke-width="0.9"/>
<line x1="794.33" y1="306.8" x2="794.33" y2="346.4" stroke="#474747" stroke-width="1.15"/>
<rect x="792.13" y="321.4" width="4.4" height="23.6" fill="#96fa6e" stroke="#0a160a" stroke-width="0.9"/>
<rect x="790.78" y="327" width="7.1" height="15" fill="#96fa6e" stroke="#0a160a" stroke-width="0.9"/>
<line x1="790.78" y1="333.4" x2="797.88" y2="333.4" stroke="#0a160a" stroke-width="0.9"/>
<line x1="813.4" y1="328.4" x2="813.4" y2="347" stroke="#474747" stroke-width="1.15"/>
<rect x="811.2" y="337.2" width="4.4" height="9.2" fill="#96fa6e" stroke="#0a160a" stroke-width="0.9"/>
<rect x="809.85" y="342.6" width="7.1" height="3.6" fill="#96fa6e" stroke="#0a160a" stroke-width="0.9"/>
<line x1="809.85" y1="345" x2="816.95" y2="345" stroke="#0a160a" stroke-width="0.9"/>
<polyline points="50.6,347 69.67,347 88.74,347 107.81,347 126.88,347 145.95,347 165.02,347 184.09,347 203.16,347 222.23,346.8 241.3,345.2 260.37,346.8 279.44,347 298.51,344.2 317.58,346.8 336.65,346.4 355.72,343 374.79,346.6 393.86,346.8 412.93,346.6 432,346.6 451.07,346.6 470.14,346.4 489.21,346 508.28,346.4 527.35,343.6 546.42,337.2 565.49,347 584.56,347 603.63,341.8 622.7,335.8 641.77,346.4 660.84,344.2 679.91,336 698.98,310 718.05,339 737.12,343.6 756.19,330.6 775.26,300.2 794.33,332.6 813.4,343.2" fill="none" stroke="#d0242e" stroke-width="1.45" stroke-linejoin="round"/>
<polyline points="50.6,347 69.67,346.8 88.74,346.8 107.81,346.9 126.88,346.9 145.95,346.9 165.02,346.9 184.09,346.9 203.16,346.8 222.23,346.8 241.3,346.7 260.37,346.7 279.44,346.8 298.51,346.4 317.58,346.6 336.65,346.4 355.72,346 374.79,346.6 393.86,346.2 412.93,345.6 432,345.4 451.07,345.2 470.14,345 489.21,345 508.28,345.4 527.35,343 546.42,335.2 565.49,342.6 584.56,344.4 603.63,339.6 622.7,318.4 641.77,332.6 660.84,344.4 679.91,334.4 698.98,310 718.05,328 737.12,341.8 756.19,333.4 775.26,314 794.33,333.4 813.4,343.2" fill="none" stroke="#2222c4" stroke-width="1.45" stroke-linejoin="round"/>
</g>
<rect x="41" y="237" width="782" height="115" fill="none" stroke="#000" stroke-width="1.35"/>
<line x1="36.2" y1="347" x2="41" y2="347" stroke="#000" stroke-width="1.15"/>
<text x="30.9" y="351.6" font-size="11.6" text-anchor="end" fill="#111" stroke="#111" stroke-width="0.1" textLength="7" lengthAdjust="spacingAndGlyphs">0</text>
<line x1="36.2" y1="307" x2="41" y2="307" stroke="#000" stroke-width="1.15"/>
<text x="30.9" y="311.6" font-size="11.6" text-anchor="end" fill="#111" stroke="#111" stroke-width="0.1" textLength="13.6" lengthAdjust="spacingAndGlyphs">20</text>
<line x1="36.2" y1="267" x2="41" y2="267" stroke="#000" stroke-width="1.15"/>
<text x="30.9" y="271.6" font-size="11.6" text-anchor="end" fill="#111" stroke="#111" stroke-width="0.1" textLength="13.6" lengthAdjust="spacingAndGlyphs">40</text>
<line x1="50.6" y1="352" x2="50.6" y2="356.8" stroke="#000" stroke-width="1.15"/>
<line x1="126.88" y1="352" x2="126.88" y2="356.8" stroke="#000" stroke-width="1.15"/>
<line x1="203.16" y1="352" x2="203.16" y2="356.8" stroke="#000" stroke-width="1.15"/>
<line x1="279.44" y1="352" x2="279.44" y2="356.8" stroke="#000" stroke-width="1.15"/>
<line x1="355.72" y1="352" x2="355.72" y2="356.8" stroke="#000" stroke-width="1.15"/>
<line x1="432" y1="352" x2="432" y2="356.8" stroke="#000" stroke-width="1.15"/>
<line x1="508.28" y1="352" x2="508.28" y2="356.8" stroke="#000" stroke-width="1.15"/>
<line x1="584.56" y1="352" x2="584.56" y2="356.8" stroke="#000" stroke-width="1.15"/>
<line x1="660.84" y1="352" x2="660.84" y2="356.8" stroke="#000" stroke-width="1.15"/>
<line x1="737.12" y1="352" x2="737.12" y2="356.8" stroke="#000" stroke-width="1.15"/>
<line x1="813.4" y1="352" x2="813.4" y2="356.8" stroke="#000" stroke-width="1.15"/>
<text x="41.2" y="374.6" font-size="12.9" text-anchor="start" fill="#111" stroke="#111" stroke-width="0.15" textLength="138.6" lengthAdjust="spacingAndGlyphs">10m wind speed (m/s)</text>
<clipPath id="c379"><rect x="41" y="379.3" width="782" height="115"/></clipPath>
<g clip-path="url(#c379)">
<line x1="50.6" y1="379.3" x2="50.6" y2="494.3" stroke="#d4d4d4" stroke-width="0.7" stroke-dasharray="2.6,1.1"/>
<line x1="126.88" y1="379.3" x2="126.88" y2="494.3" stroke="#d4d4d4" stroke-width="0.7" stroke-dasharray="2.6,1.1"/>
<line x1="203.16" y1="379.3" x2="203.16" y2="494.3" stroke="#d4d4d4" stroke-width="0.7" stroke-dasharray="2.6,1.1"/>
<line x1="279.44" y1="379.3" x2="279.44" y2="494.3" stroke="#d4d4d4" stroke-width="0.7" stroke-dasharray="2.6,1.1"/>
<line x1="355.72" y1="379.3" x2="355.72" y2="494.3" stroke="#d4d4d4" stroke-width="0.7" stroke-dasharray="2.6,1.1"/>
<line x1="432" y1="379.3" x2="432" y2="494.3" stroke="#d4d4d4" stroke-width="0.7" stroke-dasharray="2.6,1.1"/>
<line x1="508.28" y1="379.3" x2="508.28" y2="494.3" stroke="#d4d4d4" stroke-width="0.7" stroke-dasharray="2.6,1.1"/>
<line x1="584.56" y1="379.3" x2="584.56" y2="494.3" stroke="#d4d4d4" stroke-width="0.7" stroke-dasharray="2.6,1.1"/>
<line x1="660.84" y1="379.3" x2="660.84" y2="494.3" stroke="#d4d4d4" stroke-width="0.7" stroke-dasharray="2.6,1.1"/>
<line x1="737.12" y1="379.3" x2="737.12" y2="494.3" stroke="#d4d4d4" stroke-width="0.7" stroke-dasharray="2.6,1.1"/>
<line x1="813.4" y1="379.3" x2="813.4" y2="494.3" stroke="#d4d4d4" stroke-width="0.7" stroke-dasharray="2.6,1.1"/>
<line x1="41" y1="462.3" x2="823" y2="462.3" stroke="#d4d4d4" stroke-width="0.7" stroke-dasharray="2.6,1.1"/>
<line x1="41" y1="430.4" x2="823" y2="430.4" stroke="#d4d4d4" stroke-width="0.7" stroke-dasharray="2.6,1.1"/>
<line x1="41" y1="398.5" x2="823" y2="398.5" stroke="#d4d4d4" stroke-width="0.7" stroke-dasharray="2.6,1.1"/>
<line x1="50.6" y1="425.3" x2="50.6" y2="425.3" stroke="#474747" stroke-width="1.15"/>
<rect x="48.4" y="425.3" width="4.4" height="0" fill="#96fa6e" stroke="#0a160a" stroke-width="0.9"/>
<rect x="47.05" y="425.3" width="7.1" height="0" fill="#96fa6e" stroke="#0a160a" stroke-width="0.9"/>
<line x1="47.05" y1="425.3" x2="54.15" y2="425.3" stroke="#0a160a" stroke-width="0.9"/>
<line x1="69.67" y1="401.85" x2="69.67" y2="416.52" stroke="#474747" stroke-width="1.15"/>
<rect x="67.47" y="406.48" width="4.4" height="4.94" fill="#96fa6e" stroke="#0a160a" stroke-width="0.9"/>
<rect x="66.12" y="406.95" width="7.1" height="3.99" fill="#96fa6e" stroke="#0a160a" stroke-width="0.9"/>
<line x1="66.12" y1="408.87" x2="73.22" y2="408.87" stroke="#0a160a" stroke-width="0.9"/>
<line x1="88.74" y1="446.03" x2="88.74" y2="457.99" stroke="#474747" stroke-width="1.15"/>
<rect x="86.54" y="450.66" width="4.4" height="6.54" fill="#96fa6e" stroke="#0a160a" stroke-width="0.9"/>
<rect x="85.19" y="451.77" width="7.1" height="4.15" fill="#96fa6e" stroke="#0a160a" stroke-width="0.9"/>
<line x1="85.19" y1="453.85" x2="92.29" y2="453.85" stroke="#0a160a" stroke-width="0.9"/>
<line x1="107.81" y1="455.28" x2="107.81" y2="470.91" stroke="#474747" stroke-width="1.15"/>
<rect x="105.61" y="464.53" width="4.4" height="4.63" fill="#96fa6e" stroke="#0a160a" stroke-width="0.9"/>
<rect x="104.26" y="464.85" width="7.1" height="3.83" fill="#96fa6e" stroke="#0a160a" stroke-width="0.9"/>
<line x1="104.26" y1="466.77" x2="111.36" y2="466.77" stroke="#0a160a" stroke-width="0.9"/>
<line x1="126.88" y1="425.46" x2="126.88" y2="447.63" stroke="#474747" stroke-width="1.15"/>
<rect x="124.68" y="427.21" width="4.4" height="14.2" fill="#96fa6e" stroke="#0a160a" stroke-width="0.9"/>
<rect x="123.33" y="432.31" width="7.1" height="8.29" fill="#96fa6e" stroke="#0a160a" stroke-width="0.9"/>
<line x1="123.33" y1="435.98" x2="130.43" y2="435.98" stroke="#0a160a" stroke-width="0.9"/>
<line x1="145.95" y1="403.29" x2="145.95" y2="421.79" stroke="#474747" stroke-width="1.15"/>
<rect x="143.75" y="405.2" width="4.4" height="10.53" fill="#96fa6e" stroke="#0a160a" stroke-width="0.9"/>
<rect x="142.4" y="407.75" width="7.1" height="6.06" fill="#96fa6e" stroke="#0a160a" stroke-width="0.9"/>
<line x1="142.4" y1="411.1" x2="149.5" y2="411.1" stroke="#0a160a" stroke-width="0.9"/>
<line x1="165.02" y1="452.57" x2="165.02" y2="464.53" stroke="#474747" stroke-width="1.15"/>
<rect x="162.82" y="458.63" width="4.4" height="3.99" fill="#96fa6e" stroke="#0a160a" stroke-width="0.9"/>
<rect x="161.47" y="459.43" width="7.1" height="2.07" fill="#96fa6e" stroke="#0a160a" stroke-width="0.9"/>
<line x1="161.47" y1="460.86" x2="168.57" y2="460.86" stroke="#0a160a" stroke-width="0.9"/>
<line x1="184.09" y1="458.95" x2="184.09" y2="470.12" stroke="#474747" stroke-width="1.15"/>
<rect x="181.89" y="462.62" width="4.4" height="5.58" fill="#96fa6e" stroke="#0a160a" stroke-width="0.9"/>
<rect x="180.54" y="463.58" width="7.1" height="3.51" fill="#96fa6e" stroke="#0a160a" stroke-width="0.9"/>
<line x1="180.54" y1="465.49" x2="187.64" y2="465.49" stroke="#0a160a" stroke-width="0.9"/>
<line x1="203.16" y1="425.46" x2="203.16" y2="442.04" stroke="#474747" stroke-width="1.15"/>
<rect x="200.96" y="430.4" width="4.4" height="10.21" fill="#96fa6e" stroke="#0a160a" stroke-width="0.9"/>
<rect x="199.61" y="433.11" width="7.1" height="4.63" fill="#96fa6e" stroke="#0a160a" stroke-width="0.9"/>
<line x1="199.61" y1="435.34" x2="206.71" y2="435.34" stroke="#0a160a" stroke-width="0.9"/>
<line x1="222.23" y1="387.02" x2="222.23" y2="416.52" stroke="#474747" stroke-width="1.15"/>
<rect x="220.03" y="393.56" width="4.4" height="17.86" fill="#96fa6e" stroke="#0a160a" stroke-width="0.9"/>
<rect x="218.68" y="399.62" width="7.1" height="6.86" fill="#96fa6e" stroke="#0a160a" stroke-width="0.9"/>
<line x1="218.68" y1="403.29" x2="225.78" y2="403.29" stroke="#0a160a" stroke-width="0.9"/>
<line x1="241.3" y1="427.69" x2="241.3" y2="457.2" stroke="#474747" stroke-width="1.15"/>
<rect x="239.1" y="434.71" width="4.4" height="16.91" fill="#96fa6e" stroke="#0a160a" stroke-width="0.9"/>
<rect x="237.75" y="437.74" width="7.1" height="9.25" fill="#96fa6e" stroke="#0a160a" stroke-width="0.9"/>
<line x1="237.75" y1="442.36" x2="244.85" y2="442.36" stroke="#0a160a" stroke-width="0.9"/>
<line x1="260.37" y1="432.31" x2="260.37" y2="458.95" stroke="#474747" stroke-width="1.15"/>
<rect x="258.17" y="438.38" width="4.4" height="15.15" fill="#96fa6e" stroke="#0a160a" stroke-width="0.9"/>
<rect x="256.82" y="441.41" width="7.1" height="7.5" fill="#96fa6e" stroke="#0a160a" stroke-width="0.9"/>
<line x1="256.82" y1="445.71" x2="263.92" y2="445.71" stroke="#0a160a" stroke-width="0.9"/>
<line x1="279.44" y1="405.52" x2="279.44" y2="436.78" stroke="#474747" stroke-width="1.15"/>
<rect x="277.24" y="409.19" width="4.4" height="18.02" fill="#96fa6e" stroke="#0a160a" stroke-width="0.9"/>
<rect x="275.89" y="412.86" width="7.1" height="11.48" fill="#96fa6e" stroke="#0a160a" stroke-width="0.9"/>
<line x1="275.89" y1="419.39" x2="282.99" y2="419.39" stroke="#0a160a" stroke-width="0.9"/>
<line x1="298.51" y1="384.3" x2="298.51" y2="419.87" stroke="#474747" stroke-width="1.15"/>
<rect x="296.31" y="388.61" width="4.4" height="16.59" fill="#96fa6e" stroke="#0a160a" stroke-width="0.9"/>
<rect x="294.96" y="392.28" width="7.1" height="7.66" fill="#96fa6e" stroke="#0a160a" stroke-width="0.9"/>
<line x1="294.96" y1="397.7" x2="302.06" y2="397.7" stroke="#0a160a" stroke-width="0.9"/>
<line x1="317.58" y1="420.19" x2="317.58" y2="463.58" stroke="#474747" stroke-width="1.15"/>
<rect x="315.38" y="438.38" width="4.4" height="17.23" fill="#96fa6e" stroke="#0a160a" stroke-width="0.9"/>
<rect x="314.03" y="443.32" width="7.1" height="9.73" fill="#96fa6e" stroke="#0a160a" stroke-width="0.9"/>
<line x1="314.03" y1="449.38" x2="321.13" y2="449.38" stroke="#0a160a" stroke-width="0.9"/>
<line x1="336.65" y1="432.31" x2="336.65" y2="466.77" stroke="#474747" stroke-width="1.15"/>
<rect x="334.45" y="440.61" width="4.4" height="17.39" fill="#96fa6e" stroke="#0a160a" stroke-width="0.9"/>
<rect x="333.1" y="446.99" width="7.1" height="7.34" fill="#96fa6e" stroke="#0a160a" stroke-width="0.9"/>
<line x1="333.1" y1="450.66" x2="340.2" y2="450.66" stroke="#0a160a" stroke-width="0.9"/>
<line x1="355.72" y1="414.77" x2="355.72" y2="437.74" stroke="#474747" stroke-width="1.15"/>
<rect x="353.52" y="416.2" width="4.4" height="19.78" fill="#96fa6e" stroke="#0a160a" stroke-width="0.9"/>
<rect x="352.17" y="421.79" width="7.1" height="10.53" fill="#96fa6e" stroke="#0a160a" stroke-width="0.9"/>
<line x1="352.17" y1="427.69" x2="359.27" y2="427.69" stroke="#0a160a" stroke-width="0.9"/>
<line x1="374.79" y1="398.98" x2="374.79" y2="433.11" stroke="#474747" stroke-width="1.15"/>
<rect x="372.59" y="400.89" width="4.4" height="18.5" fill="#96fa6e" stroke="#0a160a" stroke-width="0.9"/>
<rect x="371.24" y="404.56" width="7.1" height="9.25" fill="#96fa6e" stroke="#0a160a" stroke-width="0.9"/>
<line x1="371.24" y1="408.87" x2="378.34" y2="408.87" stroke="#0a160a" stroke-width="0.9"/>
<line x1="393.86" y1="433.11" x2="393.86" y2="458.95" stroke="#474747" stroke-width="1.15"/>
<rect x="391.66" y="441.41" width="4.4" height="15.79" fill="#96fa6e" stroke="#0a160a" stroke-width="0.9"/>
<rect x="390.31" y="446.03" width="7.1" height="8.29" fill="#96fa6e" stroke="#0a160a" stroke-width="0.9"/>
<line x1="390.31" y1="450.66" x2="397.41" y2="450.66" stroke="#0a160a" stroke-width="0.9"/>
<line x1="412.93" y1="432.31" x2="412.93" y2="462.62" stroke="#474747" stroke-width="1.15"/>
<rect x="410.73" y="443.32" width="4.4" height="14.67" fill="#96fa6e" stroke="#0a160a" stroke-width="0.9"/>
<rect x="409.38" y="446.99" width="7.1" height="8.29" fill="#96fa6e" stroke="#0a160a" stroke-width="0.9"/>
<line x1="409.38" y1="451.93" x2="416.48" y2="451.93" stroke="#0a160a" stroke-width="0.9"/>
<line x1="432" y1="405.52" x2="432" y2="444.6" stroke="#474747" stroke-width="1.15"/>
<rect x="429.8" y="421.79" width="4.4" height="14.67" fill="#96fa6e" stroke="#0a160a" stroke-width="0.9"/>
<rect x="428.45" y="423.54" width="7.1" height="9.57" fill="#96fa6e" stroke="#0a160a" stroke-width="0.9"/>
<line x1="428.45" y1="429.12" x2="435.55" y2="429.12" stroke="#0a160a" stroke-width="0.9"/>
<line x1="451.07" y1="406.48" x2="451.07" y2="447.94" stroke="#474747" stroke-width="1.15"/>
<rect x="448.87" y="411.1" width="4.4" height="23.93" fill="#96fa6e" stroke="#0a160a" stroke-width="0.9"/>
<rect x="447.52" y="415.09" width="7.1" height="14.36" fill="#96fa6e" stroke="#0a160a" stroke-width="0.9"/>
<line x1="447.52" y1="423.54" x2="454.62" y2="423.54" stroke="#0a160a" stroke-width="0.9"/>
<line x1="470.14" y1="436.78" x2="470.14" y2="464.53" stroke="#474747" stroke-width="1.15"/>
<rect x="467.94" y="448.26" width="4.4" height="16.27" fill="#96fa6e" stroke="#0a160a" stroke-width="0.9"/>
<rect x="466.59" y="453.53" width="7.1" height="9.09" fill="#96fa6e" stroke="#0a160a" stroke-width="0.9"/>
<line x1="466.59" y1="457.99" x2="473.69" y2="457.99" stroke="#0a160a" stroke-width="0.9"/>
<line x1="489.21" y1="459.43" x2="489.21" y2="477.77" stroke="#474747" stroke-width="1.15"/>
<rect x="487.01" y="463.58" width="4.4" height="13.4" fill="#96fa6e" stroke="#0a160a" stroke-width="0.9"/>
<rect x="485.66" y="466.29" width="7.1" height="5.9" fill="#96fa6e" stroke="#0a160a" stroke-width="0.9"/>
<line x1="485.66" y1="469.16" x2="492.76" y2="469.16" stroke="#0a160a" stroke-width="0.9"/>
<line x1="508.28" y1="439.01" x2="508.28" y2="478.25" stroke="#474747" stroke-width="1.15"/>
<rect x="506.08" y="453.53" width="4.4" height="14.99" fill="#96fa6e" stroke="#0a160a" stroke-width="0.9"/>
<rect x="504.73" y="456.72" width="7.1" height="7.82" fill="#96fa6e" stroke="#0a160a" stroke-width="0.9"/>
<line x1="504.73" y1="460.86" x2="511.83" y2="460.86" stroke="#0a160a" stroke-width="0.9"/>
<line x1="527.35" y1="433.11" x2="527.35" y2="468.52" stroke="#474747" stroke-width="1.15"/>
<rect x="525.15" y="444.28" width="4.4" height="17.55" fill="#96fa6e" stroke="#0a160a" stroke-width="0.9"/>
<rect x="523.8" y="447.63" width="7.1" height="9.09" fill="#96fa6e" stroke="#0a160a" stroke-width="0.9"/>
<line x1="523.8" y1="450.66" x2="530.9" y2="450.66" stroke="#0a160a" stroke-width="0.9"/>
<line x1="546.42" y1="459.91" x2="546.42" y2="476.5" stroke="#474747" stroke-width="1.15"/>
<rect x="544.22" y="463.58" width="4.4" height="10.21" fill="#96fa6e" stroke="#0a160a" stroke-width="0.9"/>
<rect x="542.87" y="465.49" width="7.1" height="4.63" fill="#96fa6e" stroke="#0a160a" stroke-width="0.9"/>
<line x1="542.87" y1="467.24" x2="549.97" y2="467.24" stroke="#0a160a" stroke-width="0.9"/>
<line x1="565.49" y1="467.24" x2="565.49" y2="485.11" stroke="#474747" stroke-width="1.15"/>
<rect x="563.29" y="470.43" width="4.4" height="11.64" fill="#96fa6e" stroke="#0a160a" stroke-width="0.9"/>
<rect x="561.94" y="472.83" width="7.1" height="7.34" fill="#96fa6e" stroke="#0a160a" stroke-width="0.9"/>
<line x1="561.94" y1="476.5" x2="569.04" y2="476.5" stroke="#0a160a" stroke-width="0.9"/>
<line x1="584.56" y1="451.29" x2="584.56" y2="476.97" stroke="#474747" stroke-width="1.15"/>
<rect x="582.36" y="459.43" width="4.4" height="12.76" fill="#96fa6e" stroke="#0a160a" stroke-width="0.9"/>
<rect x="581.01" y="462.62" width="7.1" height="7.5" fill="#96fa6e" stroke="#0a160a" stroke-width="0.9"/>
<line x1="581.01" y1="466.29" x2="588.11" y2="466.29" stroke="#0a160a" stroke-width="0.9"/>
<line x1="603.63" y1="435.98" x2="603.63" y2="472.83" stroke="#474747" stroke-width="1.15"/>
<rect x="601.43" y="446.03" width="4.4" height="23.13" fill="#96fa6e" stroke="#0a160a" stroke-width="0.9"/>
<rect x="600.08" y="450.66" width="7.1" height="16.59" fill="#96fa6e" stroke="#0a160a" stroke-width="0.9"/>
<line x1="600.08" y1="457.2" x2="607.18" y2="457.2" stroke="#0a160a" stroke-width="0.9"/>
<line x1="622.7" y1="453.53" x2="622.7" y2="480.8" stroke="#474747" stroke-width="1.15"/>
<rect x="620.5" y="457.99" width="4.4" height="19.78" fill="#96fa6e" stroke="#0a160a" stroke-width="0.9"/>
<rect x="619.15" y="461.18" width="7.1" height="11.64" fill="#96fa6e" stroke="#0a160a" stroke-width="0.9"/>
<line x1="619.15" y1="466.77" x2="626.25" y2="466.77" stroke="#0a160a" stroke-width="0.9"/>
<line x1="641.77" y1="468.2" x2="641.77" y2="488.78" stroke="#474747" stroke-width="1.15"/>
<rect x="639.57" y="473.31" width="4.4" height="10.05" fill="#96fa6e" stroke="#0a160a" stroke-width="0.9"/>
<rect x="638.22" y="475.22" width="7.1" height="5.9" fill="#96fa6e" stroke="#0a160a" stroke-width="0.9"/>
<line x1="638.22" y1="477.77" x2="645.32" y2="477.77" stroke="#0a160a" stroke-width="0.9"/>
<line x1="660.84" y1="461.18" x2="660.84" y2="481.12" stroke="#474747" stroke-width="1.15"/>
<rect x="658.64" y="464.21" width="4.4" height="13.24" fill="#96fa6e" stroke="#0a160a" stroke-width="0.9"/>
<rect x="657.29" y="468.2" width="7.1" height="8.29" fill="#96fa6e" stroke="#0a160a" stroke-width="0.9"/>
<line x1="657.29" y1="472.83" x2="664.39" y2="472.83" stroke="#0a160a" stroke-width="0.9"/>
<line x1="679.91" y1="445.07" x2="679.91" y2="475.22" stroke="#474747" stroke-width="1.15"/>
<rect x="677.71" y="451.93" width="4.4" height="18.98" fill="#96fa6e" stroke="#0a160a" stroke-width="0.9"/>
<rect x="676.36" y="459.43" width="7.1" height="9.73" fill="#96fa6e" stroke="#0a160a" stroke-width="0.9"/>
<line x1="676.36" y1="464.21" x2="683.46" y2="464.21" stroke="#0a160a" stroke-width="0.9"/>
<line x1="698.98" y1="457.99" x2="698.98" y2="482.08" stroke="#474747" stroke-width="1.15"/>
<rect x="696.78" y="463.1" width="4.4" height="18.02" fill="#96fa6e" stroke="#0a160a" stroke-width="0.9"/>
<rect x="695.43" y="465.97" width="7.1" height="12.44" fill="#96fa6e" stroke="#0a160a" stroke-width="0.9"/>
<line x1="695.43" y1="473.78" x2="702.53" y2="473.78" stroke="#0a160a" stroke-width="0.9"/>
<line x1="718.05" y1="464.21" x2="718.05" y2="489.42" stroke="#474747" stroke-width="1.15"/>
<rect x="715.85" y="471.87" width="4.4" height="13.88" fill="#96fa6e" stroke="#0a160a" stroke-width="0.9"/>
<rect x="714.5" y="474.58" width="7.1" height="8.77" fill="#96fa6e" stroke="#0a160a" stroke-width="0.9"/>
<line x1="714.5" y1="478.25" x2="721.6" y2="478.25" stroke="#0a160a" stroke-width="0.9"/>
<line x1="737.12" y1="459.91" x2="737.12" y2="486.23" stroke="#474747" stroke-width="1.15"/>
<rect x="734.92" y="464.21" width="4.4" height="14.04" fill="#96fa6e" stroke="#0a160a" stroke-width="0.9"/>
<rect x="733.57" y="470.12" width="7.1" height="6.38" fill="#96fa6e" stroke="#0a160a" stroke-width="0.9"/>
<line x1="733.57" y1="473.31" x2="740.67" y2="473.31" stroke="#0a160a" stroke-width="0.9"/>
<line x1="756.19" y1="443.32" x2="756.19" y2="473.78" stroke="#474747" stroke-width="1.15"/>
<rect x="753.99" y="456.24" width="4.4" height="15.95" fill="#96fa6e" stroke="#0a160a" stroke-width="0.9"/>
<rect x="752.64" y="459.91" width="7.1" height="10.21" fill="#96fa6e" stroke="#0a160a" stroke-width="0.9"/>
<line x1="752.64" y1="462.62" x2="759.74" y2="462.62" stroke="#0a160a" stroke-width="0.9"/>
<line x1="775.26" y1="451.29" x2="775.26" y2="485.75" stroke="#474747" stroke-width="1.15"/>
<rect x="773.06" y="460.86" width="4.4" height="20.26" fill="#96fa6e" stroke="#0a160a" stroke-width="0.9"/>
<rect x="771.71" y="465.97" width="7.1" height="11.01" fill="#96fa6e" stroke="#0a160a" stroke-width="0.9"/>
<line x1="771.71" y1="469.16" x2="778.81" y2="469.16" stroke="#0a160a" stroke-width="0.9"/>
<line x1="794.33" y1="456.24" x2="794.33" y2="488.78" stroke="#474747" stroke-width="1.15"/>
<rect x="792.13" y="468.2" width="4.4" height="15.15" fill="#96fa6e" stroke="#0a160a" stroke-width="0.9"/>
<rect x="790.78" y="470.43" width="7.1" height="9.25" fill="#96fa6e" stroke="#0a160a" stroke-width="0.9"/>
<line x1="790.78" y1="475.54" x2="797.88" y2="475.54" stroke="#0a160a" stroke-width="0.9"/>
<line x1="813.4" y1="445.71" x2="813.4" y2="478.25" stroke="#474747" stroke-width="1.15"/>
<rect x="811.2" y="460.86" width="4.4" height="12.44" fill="#96fa6e" stroke="#0a160a" stroke-width="0.9"/>
<rect x="809.85" y="463.58" width="7.1" height="8.29" fill="#96fa6e" stroke="#0a160a" stroke-width="0.9"/>
<line x1="809.85" y1="467.24" x2="816.95" y2="467.24" stroke="#0a160a" stroke-width="0.9"/>
<polyline points="50.6,425.3 69.67,408.87 88.74,453.53 107.81,466.77 126.88,433.59 145.95,411.1 165.02,461.82 184.09,466.29 203.16,435.03 222.23,405.52 241.3,426.73 260.37,438.69 279.44,424.02 298.51,406.48 317.58,451.93 336.65,454.32 355.72,437.74 374.79,415.73 393.86,460.86 412.93,457.51 432,420.19 451.07,423.06 470.14,466.77 489.21,477.77 508.28,463.1 527.35,450.66 546.42,461.18 565.49,469.16 584.56,461.18 603.63,445.71 622.7,462.62 641.77,479.69 660.84,473.78 679.91,464.21 698.98,487.02 718.05,476.97 737.12,471.87 756.19,461.18 775.26,468.2 794.33,461.18 813.4,445.71" fill="none" stroke="#d0242e" stroke-width="1.45" stroke-linejoin="round"/>
<polyline points="50.6,425.3 69.67,409.19 88.74,453.85 107.81,466.29 126.88,434.07 145.95,411.42 165.02,460.86 184.09,464.53 203.16,435.34 222.23,404.56 241.3,440.61 260.37,445.07 279.44,419.39 298.51,398.18 317.58,448.26 336.65,449.38 355.72,428.49 374.79,410.14 393.86,449.7 412.93,451.29 432,427.69 451.07,423.06 470.14,457.99 489.21,467.88 508.28,461.18 527.35,451.61 546.42,466.29 565.49,474.58 584.56,464.85 603.63,457.99 622.7,466.29 641.77,477.45 660.84,472.83 679.91,464.21 698.98,472.83 718.05,477.77 737.12,472.19 756.19,464.21 775.26,470.43 794.33,473.78 813.4,466.29" fill="none" stroke="#2222c4" stroke-width="1.45" stroke-linejoin="round"/>
</g>
<rect x="41" y="379.3" width="782" height="115" fill="none" stroke="#000" stroke-width="1.35"/>
<line x1="36.2" y1="462.3" x2="41" y2="462.3" stroke="#000" stroke-width="1.15"/>
<text x="30.9" y="466.9" font-size="11.6" text-anchor="end" fill="#111" stroke="#111" stroke-width="0.1" textLength="7" lengthAdjust="spacingAndGlyphs">2</text>
<line x1="36.2" y1="430.4" x2="41" y2="430.4" stroke="#000" stroke-width="1.15"/>
<text x="30.9" y="435" font-size="11.6" text-anchor="end" fill="#111" stroke="#111" stroke-width="0.1" textLength="7" lengthAdjust="spacingAndGlyphs">4</text>
<line x1="36.2" y1="398.5" x2="41" y2="398.5" stroke="#000" stroke-width="1.15"/>
<text x="30.9" y="403.1" font-size="11.6" text-anchor="end" fill="#111" stroke="#111" stroke-width="0.1" textLength="7" lengthAdjust="spacingAndGlyphs">6</text>
<line x1="50.6" y1="494.3" x2="50.6" y2="499.1" stroke="#000" stroke-width="1.15"/>
<line x1="126.88" y1="494.3" x2="126.88" y2="499.1" stroke="#000" stroke-width="1.15"/>
<line x1="203.16" y1="494.3" x2="203.16" y2="499.1" stroke="#000" stroke-width="1.15"/>
<line x1="279.44" y1="494.3" x2="279.44" y2="499.1" stroke="#000" stroke-width="1.15"/>
<line x1="355.72" y1="494.3" x2="355.72" y2="499.1" stroke="#000" stroke-width="1.15"/>
<line x1="432" y1="494.3" x2="432" y2="499.1" stroke="#000" stroke-width="1.15"/>
<line x1="508.28" y1="494.3" x2="508.28" y2="499.1" stroke="#000" stroke-width="1.15"/>
<line x1="584.56" y1="494.3" x2="584.56" y2="499.1" stroke="#000" stroke-width="1.15"/>
<line x1="660.84" y1="494.3" x2="660.84" y2="499.1" stroke="#000" stroke-width="1.15"/>
<line x1="737.12" y1="494.3" x2="737.12" y2="499.1" stroke="#000" stroke-width="1.15"/>
<line x1="813.4" y1="494.3" x2="813.4" y2="499.1" stroke="#000" stroke-width="1.15"/>
<text x="41.2" y="516.6" font-size="12.9" text-anchor="start" fill="#111" stroke="#111" stroke-width="0.15" textLength="129.6" lengthAdjust="spacingAndGlyphs">2m temperature (°C)</text>
<clipPath id="c521"><rect x="41" y="521.5" width="782" height="115.1"/></clipPath>
<g clip-path="url(#c521)">
<line x1="50.6" y1="521.5" x2="50.6" y2="636.6" stroke="#d4d4d4" stroke-width="0.7" stroke-dasharray="2.6,1.1"/>
<line x1="126.88" y1="521.5" x2="126.88" y2="636.6" stroke="#d4d4d4" stroke-width="0.7" stroke-dasharray="2.6,1.1"/>
<line x1="203.16" y1="521.5" x2="203.16" y2="636.6" stroke="#d4d4d4" stroke-width="0.7" stroke-dasharray="2.6,1.1"/>
<line x1="279.44" y1="521.5" x2="279.44" y2="636.6" stroke="#d4d4d4" stroke-width="0.7" stroke-dasharray="2.6,1.1"/>
<line x1="355.72" y1="521.5" x2="355.72" y2="636.6" stroke="#d4d4d4" stroke-width="0.7" stroke-dasharray="2.6,1.1"/>
<line x1="432" y1="521.5" x2="432" y2="636.6" stroke="#d4d4d4" stroke-width="0.7" stroke-dasharray="2.6,1.1"/>
<line x1="508.28" y1="521.5" x2="508.28" y2="636.6" stroke="#d4d4d4" stroke-width="0.7" stroke-dasharray="2.6,1.1"/>
<line x1="584.56" y1="521.5" x2="584.56" y2="636.6" stroke="#d4d4d4" stroke-width="0.7" stroke-dasharray="2.6,1.1"/>
<line x1="660.84" y1="521.5" x2="660.84" y2="636.6" stroke="#d4d4d4" stroke-width="0.7" stroke-dasharray="2.6,1.1"/>
<line x1="737.12" y1="521.5" x2="737.12" y2="636.6" stroke="#d4d4d4" stroke-width="0.7" stroke-dasharray="2.6,1.1"/>
<line x1="813.4" y1="521.5" x2="813.4" y2="636.6" stroke="#d4d4d4" stroke-width="0.7" stroke-dasharray="2.6,1.1"/>
<line x1="41" y1="636" x2="823" y2="636" stroke="#d4d4d4" stroke-width="0.7" stroke-dasharray="2.6,1.1"/>
<line x1="41" y1="609.62" x2="823" y2="609.62" stroke="#d4d4d4" stroke-width="0.7" stroke-dasharray="2.6,1.1"/>
<line x1="41" y1="583.24" x2="823" y2="583.24" stroke="#d4d4d4" stroke-width="0.7" stroke-dasharray="2.6,1.1"/>
<line x1="41" y1="556.86" x2="823" y2="556.86" stroke="#d4d4d4" stroke-width="0.7" stroke-dasharray="2.6,1.1"/>
<line x1="41" y1="530.48" x2="823" y2="530.48" stroke="#d4d4d4" stroke-width="0.7" stroke-dasharray="2.6,1.1"/>
<line x1="50.6" y1="593.79" x2="50.6" y2="593.79" stroke="#474747" stroke-width="1.15"/>
<rect x="48.4" y="593.79" width="4.4" height="0" fill="#96fa6e" stroke="#0a160a" stroke-width="0.9"/>
<rect x="47.05" y="593.79" width="7.1" height="0" fill="#96fa6e" stroke="#0a160a" stroke-width="0.9"/>
<line x1="47.05" y1="593.79" x2="54.15" y2="593.79" stroke="#0a160a" stroke-width="0.9"/>
<line x1="69.67" y1="531.4" x2="69.67" y2="557.12" stroke="#474747" stroke-width="1.15"/>
<rect x="67.47" y="532.46" width="4.4" height="15.96" fill="#96fa6e" stroke="#0a160a" stroke-width="0.9"/>
<rect x="66.12" y="533.12" width="7.1" height="8.31" fill="#96fa6e" stroke="#0a160a" stroke-width="0.9"/>
<line x1="66.12" y1="535.23" x2="73.22" y2="535.23" stroke="#0a160a" stroke-width="0.9"/>
<line x1="88.74" y1="603.95" x2="88.74" y2="615.56" stroke="#474747" stroke-width="1.15"/>
<rect x="86.54" y="606.32" width="4.4" height="6.33" fill="#96fa6e" stroke="#0a160a" stroke-width="0.9"/>
<rect x="85.19" y="606.72" width="7.1" height="3.56" fill="#96fa6e" stroke="#0a160a" stroke-width="0.9"/>
<line x1="85.19" y1="608.56" x2="92.29" y2="608.56" stroke="#0a160a" stroke-width="0.9"/>
<line x1="107.81" y1="608.96" x2="107.81" y2="631.65" stroke="#474747" stroke-width="1.15"/>
<rect x="105.61" y="612.65" width="4.4" height="10.68" fill="#96fa6e" stroke="#0a160a" stroke-width="0.9"/>
<rect x="104.26" y="615.03" width="7.1" height="7.91" fill="#96fa6e" stroke="#0a160a" stroke-width="0.9"/>
<line x1="104.26" y1="618.72" x2="111.36" y2="618.72" stroke="#0a160a" stroke-width="0.9"/>
<line x1="126.88" y1="593.79" x2="126.88" y2="605.79" stroke="#474747" stroke-width="1.15"/>
<rect x="124.68" y="595.24" width="4.4" height="4.09" fill="#96fa6e" stroke="#0a160a" stroke-width="0.9"/>
<rect x="123.33" y="595.77" width="7.1" height="3.3" fill="#96fa6e" stroke="#0a160a" stroke-width="0.9"/>
<line x1="123.33" y1="597.49" x2="130.43" y2="597.49" stroke="#0a160a" stroke-width="0.9"/>
<line x1="145.95" y1="534.57" x2="145.95" y2="551.19" stroke="#474747" stroke-width="1.15"/>
<rect x="143.75" y="538.26" width="4.4" height="7.39" fill="#96fa6e" stroke="#0a160a" stroke-width="0.9"/>
<rect x="142.4" y="538.66" width="7.1" height="5.54" fill="#96fa6e" stroke="#0a160a" stroke-width="0.9"/>
<line x1="142.4" y1="541.03" x2="149.5" y2="541.03" stroke="#0a160a" stroke-width="0.9"/>
<line x1="165.02" y1="601.18" x2="165.02" y2="608.56" stroke="#474747" stroke-width="1.15"/>
<rect x="162.82" y="602.1" width="4.4" height="5.01" fill="#96fa6e" stroke="#0a160a" stroke-width="0.9"/>
<rect x="161.47" y="603.02" width="7.1" height="2.9" fill="#96fa6e" stroke="#0a160a" stroke-width="0.9"/>
<line x1="161.47" y1="604.48" x2="168.57" y2="604.48" stroke="#0a160a" stroke-width="0.9"/>
<line x1="184.09" y1="606.32" x2="184.09" y2="627.95" stroke="#474747" stroke-width="1.15"/>
<rect x="181.89" y="613.18" width="4.4" height="8.31" fill="#96fa6e" stroke="#0a160a" stroke-width="0.9"/>
<rect x="180.54" y="615.03" width="7.1" height="4.62" fill="#96fa6e" stroke="#0a160a" stroke-width="0.9"/>
<line x1="180.54" y1="617.4" x2="187.64" y2="617.4" stroke="#0a160a" stroke-width="0.9"/>
<line x1="203.16" y1="592.87" x2="203.16" y2="602.1" stroke="#474747" stroke-width="1.15"/>
<rect x="200.96" y="595.24" width="4.4" height="5.94" fill="#96fa6e" stroke="#0a160a" stroke-width="0.9"/>
<rect x="199.61" y="595.9" width="7.1" height="4.75" fill="#96fa6e" stroke="#0a160a" stroke-width="0.9"/>
<line x1="199.61" y1="598.41" x2="206.71" y2="598.41" stroke="#0a160a" stroke-width="0.9"/>
<line x1="222.23" y1="551.58" x2="222.23" y2="576.78" stroke="#474747" stroke-width="1.15"/>
<rect x="220.03" y="553.96" width="4.4" height="14.77" fill="#96fa6e" stroke="#0a160a" stroke-width="0.9"/>
<rect x="218.68" y="557.65" width="7.1" height="10.16" fill="#96fa6e" stroke="#0a160a" stroke-width="0.9"/>
<line x1="218.68" y1="562.27" x2="225.78" y2="562.27" stroke="#0a160a" stroke-width="0.9"/>
<line x1="241.3" y1="600.78" x2="241.3" y2="609.49" stroke="#474747" stroke-width="1.15"/>
<rect x="239.1" y="602.1" width="4.4" height="6.07" fill="#96fa6e" stroke="#0a160a" stroke-width="0.9"/>
<rect x="237.75" y="603.02" width="7.1" height="3.96" fill="#96fa6e" stroke="#0a160a" stroke-width="0.9"/>
<line x1="237.75" y1="604.87" x2="244.85" y2="604.87" stroke="#0a160a" stroke-width="0.9"/>
<line x1="260.37" y1="609.49" x2="260.37" y2="627.03" stroke="#474747" stroke-width="1.15"/>
<rect x="258.17" y="610.41" width="4.4" height="9.23" fill="#96fa6e" stroke="#0a160a" stroke-width="0.9"/>
<rect x="256.82" y="612.65" width="7.1" height="5.14" fill="#96fa6e" stroke="#0a160a" stroke-width="0.9"/>
<line x1="256.82" y1="615.56" x2="263.92" y2="615.56" stroke="#0a160a" stroke-width="0.9"/>
<line x1="279.44" y1="587.33" x2="279.44" y2="607.64" stroke="#474747" stroke-width="1.15"/>
<rect x="277.24" y="589.18" width="4.4" height="10.16" fill="#96fa6e" stroke="#0a160a" stroke-width="0.9"/>
<rect x="275.89" y="591.95" width="7.1" height="6.46" fill="#96fa6e" stroke="#0a160a" stroke-width="0.9"/>
<line x1="275.89" y1="595.24" x2="282.99" y2="595.24" stroke="#0a160a" stroke-width="0.9"/>
<line x1="298.51" y1="536.02" x2="298.51" y2="580.73" stroke="#474747" stroke-width="1.15"/>
<rect x="296.31" y="540.11" width="4.4" height="24.01" fill="#96fa6e" stroke="#0a160a" stroke-width="0.9"/>
<rect x="294.96" y="545.65" width="7.1" height="12.93" fill="#96fa6e" stroke="#0a160a" stroke-width="0.9"/>
<line x1="294.96" y1="552.11" x2="302.06" y2="552.11" stroke="#0a160a" stroke-width="0.9"/>
<line x1="317.58" y1="602.1" x2="317.58" y2="615.03" stroke="#474747" stroke-width="1.15"/>
<rect x="315.38" y="604.87" width="4.4" height="7.39" fill="#96fa6e" stroke="#0a160a" stroke-width="0.9"/>
<rect x="314.03" y="606.32" width="7.1" height="4.62" fill="#96fa6e" stroke="#0a160a" stroke-width="0.9"/>
<line x1="314.03" y1="608.56" x2="321.13" y2="608.56" stroke="#0a160a" stroke-width="0.9"/>
<line x1="336.65" y1="608.56" x2="336.65" y2="629.8" stroke="#474747" stroke-width="1.15"/>
<rect x="334.45" y="613.18" width="4.4" height="11.61" fill="#96fa6e" stroke="#0a160a" stroke-width="0.9"/>
<rect x="333.1" y="615.03" width="7.1" height="7.39" fill="#96fa6e" stroke="#0a160a" stroke-width="0.9"/>
<line x1="333.1" y1="618.72" x2="340.2" y2="618.72" stroke="#0a160a" stroke-width="0.9"/>
<line x1="355.72" y1="592.87" x2="355.72" y2="606.32" stroke="#474747" stroke-width="1.15"/>
<rect x="353.52" y="594.72" width="4.4" height="8.71" fill="#96fa6e" stroke="#0a160a" stroke-width="0.9"/>
<rect x="352.17" y="596.56" width="7.1" height="5.54" fill="#96fa6e" stroke="#0a160a" stroke-width="0.9"/>
<line x1="352.17" y1="599.33" x2="359.27" y2="599.33" stroke="#0a160a" stroke-width="0.9"/>
<line x1="374.79" y1="544.73" x2="374.79" y2="570.58" stroke="#474747" stroke-width="1.15"/>
<rect x="372.59" y="551.19" width="4.4" height="13.85" fill="#96fa6e" stroke="#0a160a" stroke-width="0.9"/>
<rect x="371.24" y="554.88" width="7.1" height="9.23" fill="#96fa6e" stroke="#0a160a" stroke-width="0.9"/>
<line x1="371.24" y1="560.03" x2="378.34" y2="560.03" stroke="#0a160a" stroke-width="0.9"/>
<line x1="393.86" y1="602.1" x2="393.86" y2="612.26" stroke="#474747" stroke-width="1.15"/>
<rect x="391.66" y="603.95" width="4.4" height="5.01" fill="#96fa6e" stroke="#0a160a" stroke-width="0.9"/>
<rect x="390.31" y="604.61" width="7.1" height="3.43" fill="#96fa6e" stroke="#0a160a" stroke-width="0.9"/>
<line x1="390.31" y1="606.32" x2="397.41" y2="606.32" stroke="#0a160a" stroke-width="0.9"/>
<line x1="412.93" y1="604.87" x2="412.93" y2="619.64" stroke="#474747" stroke-width="1.15"/>
<rect x="410.73" y="606.72" width="4.4" height="11.08" fill="#96fa6e" stroke="#0a160a" stroke-width="0.9"/>
<rect x="409.38" y="608.96" width="7.1" height="6.07" fill="#96fa6e" stroke="#0a160a" stroke-width="0.9"/>
<line x1="409.38" y1="612.26" x2="416.48" y2="612.26" stroke="#0a160a" stroke-width="0.9"/>
<line x1="432" y1="592.87" x2="432" y2="606.72" stroke="#474747" stroke-width="1.15"/>
<rect x="429.8" y="594.06" width="4.4" height="8.05" fill="#96fa6e" stroke="#0a160a" stroke-width="0.9"/>
<rect x="428.45" y="595.64" width="7.1" height="5.14" fill="#96fa6e" stroke="#0a160a" stroke-width="0.9"/>
<line x1="428.45" y1="597.88" x2="435.55" y2="597.88" stroke="#0a160a" stroke-width="0.9"/>
<line x1="451.07" y1="562.27" x2="451.07" y2="587.86" stroke="#474747" stroke-width="1.15"/>
<rect x="448.87" y="565.04" width="4.4" height="17.67" fill="#96fa6e" stroke="#0a160a" stroke-width="0.9"/>
<rect x="447.52" y="567.81" width="7.1" height="8.97" fill="#96fa6e" stroke="#0a160a" stroke-width="0.9"/>
<line x1="447.52" y1="571.9" x2="454.62" y2="571.9" stroke="#0a160a" stroke-width="0.9"/>
<line x1="470.14" y1="600.26" x2="470.14" y2="609.49" stroke="#474747" stroke-width="1.15"/>
<rect x="467.94" y="602.1" width="4.4" height="6.07" fill="#96fa6e" stroke="#0a160a" stroke-width="0.9"/>
<rect x="466.59" y="603.02" width="7.1" height="3.69" fill="#96fa6e" stroke="#0a160a" stroke-width="0.9"/>
<line x1="466.59" y1="604.87" x2="473.69" y2="604.87" stroke="#0a160a" stroke-width="0.9"/>
<line x1="489.21" y1="606.32" x2="489.21" y2="624.26" stroke="#474747" stroke-width="1.15"/>
<rect x="487.01" y="610.02" width="4.4" height="10.55" fill="#96fa6e" stroke="#0a160a" stroke-width="0.9"/>
<rect x="485.66" y="611.33" width="7.1" height="6.07" fill="#96fa6e" stroke="#0a160a" stroke-width="0.9"/>
<line x1="485.66" y1="614.1" x2="492.76" y2="614.1" stroke="#0a160a" stroke-width="0.9"/>
<line x1="508.28" y1="586.01" x2="508.28" y2="598.41" stroke="#474747" stroke-width="1.15"/>
<rect x="506.08" y="586.67" width="4.4" height="11.21" fill="#96fa6e" stroke="#0a160a" stroke-width="0.9"/>
<rect x="504.73" y="589.18" width="7.1" height="6.46" fill="#96fa6e" stroke="#0a160a" stroke-width="0.9"/>
<line x1="504.73" y1="591.95" x2="511.83" y2="591.95" stroke="#0a160a" stroke-width="0.9"/>
<line x1="527.35" y1="526.26" x2="527.35" y2="578.89" stroke="#474747" stroke-width="1.15"/>
<rect x="525.15" y="541.56" width="4.4" height="19.78" fill="#96fa6e" stroke="#0a160a" stroke-width="0.9"/>
<rect x="523.8" y="543.41" width="7.1" height="13.32" fill="#96fa6e" stroke="#0a160a" stroke-width="0.9"/>
<line x1="523.8" y1="550.26" x2="530.9" y2="550.26" stroke="#0a160a" stroke-width="0.9"/>
<line x1="546.42" y1="583.64" x2="546.42" y2="603.42" stroke="#474747" stroke-width="1.15"/>
<rect x="544.22" y="587.33" width="4.4" height="13.45" fill="#96fa6e" stroke="#0a160a" stroke-width="0.9"/>
<rect x="542.87" y="589.18" width="7.1" height="7.91" fill="#96fa6e" stroke="#0a160a" stroke-width="0.9"/>
<line x1="542.87" y1="592.87" x2="549.97" y2="592.87" stroke="#0a160a" stroke-width="0.9"/>
<line x1="565.49" y1="597.88" x2="565.49" y2="624.79" stroke="#474747" stroke-width="1.15"/>
<rect x="563.29" y="600.26" width="4.4" height="16.09" fill="#96fa6e" stroke="#0a160a" stroke-width="0.9"/>
<rect x="561.94" y="606.72" width="7.1" height="7.39" fill="#96fa6e" stroke="#0a160a" stroke-width="0.9"/>
<line x1="561.94" y1="610.41" x2="569.04" y2="610.41" stroke="#0a160a" stroke-width="0.9"/>
<line x1="584.56" y1="580.73" x2="584.56" y2="603.42" stroke="#474747" stroke-width="1.15"/>
<rect x="582.36" y="587.33" width="4.4" height="9.23" fill="#96fa6e" stroke="#0a160a" stroke-width="0.9"/>
<rect x="581.01" y="588.52" width="7.1" height="6.2" fill="#96fa6e" stroke="#0a160a" stroke-width="0.9"/>
<line x1="581.01" y1="591.55" x2="588.11" y2="591.55" stroke="#0a160a" stroke-width="0.9"/>
<line x1="603.63" y1="532.72" x2="603.63" y2="564.11" stroke="#474747" stroke-width="1.15"/>
<rect x="601.43" y="534.17" width="4.4" height="27.7" fill="#96fa6e" stroke="#0a160a" stroke-width="0.9"/>
<rect x="600.08" y="543.8" width="7.1" height="11.08" fill="#96fa6e" stroke="#0a160a" stroke-width="0.9"/>
<line x1="600.08" y1="548.95" x2="607.18" y2="548.95" stroke="#0a160a" stroke-width="0.9"/>
<line x1="622.7" y1="572.42" x2="622.7" y2="603.42" stroke="#474747" stroke-width="1.15"/>
<rect x="620.5" y="581.13" width="4.4" height="14.51" fill="#96fa6e" stroke="#0a160a" stroke-width="0.9"/>
<rect x="619.15" y="584.82" width="7.1" height="8.05" fill="#96fa6e" stroke="#0a160a" stroke-width="0.9"/>
<line x1="619.15" y1="588.25" x2="626.25" y2="588.25" stroke="#0a160a" stroke-width="0.9"/>
<line x1="641.77" y1="591.95" x2="641.77" y2="622.41" stroke="#474747" stroke-width="1.15"/>
<rect x="639.57" y="595.24" width="4.4" height="22.16" fill="#96fa6e" stroke="#0a160a" stroke-width="0.9"/>
<rect x="638.22" y="602.1" width="7.1" height="10.55" fill="#96fa6e" stroke="#0a160a" stroke-width="0.9"/>
<line x1="638.22" y1="608.17" x2="645.32" y2="608.17" stroke="#0a160a" stroke-width="0.9"/>
<line x1="660.84" y1="580.73" x2="660.84" y2="597.88" stroke="#474747" stroke-width="1.15"/>
<rect x="658.64" y="583.64" width="4.4" height="10.42" fill="#96fa6e" stroke="#0a160a" stroke-width="0.9"/>
<rect x="657.29" y="585.48" width="7.1" height="6.46" fill="#96fa6e" stroke="#0a160a" stroke-width="0.9"/>
<line x1="657.29" y1="588.52" x2="664.39" y2="588.52" stroke="#0a160a" stroke-width="0.9"/>
<line x1="679.91" y1="529.03" x2="679.91" y2="581.66" stroke="#474747" stroke-width="1.15"/>
<rect x="677.71" y="540.5" width="4.4" height="21.76" fill="#96fa6e" stroke="#0a160a" stroke-width="0.9"/>
<rect x="676.36" y="547.1" width="7.1" height="6.86" fill="#96fa6e" stroke="#0a160a" stroke-width="0.9"/>
<line x1="676.36" y1="551.19" x2="683.46" y2="551.19" stroke="#0a160a" stroke-width="0.9"/>
<line x1="698.98" y1="577.96" x2="698.98" y2="609.49" stroke="#474747" stroke-width="1.15"/>
<rect x="696.78" y="579.81" width="4.4" height="11.21" fill="#96fa6e" stroke="#0a160a" stroke-width="0.9"/>
<rect x="695.43" y="581.66" width="7.1" height="7.52" fill="#96fa6e" stroke="#0a160a" stroke-width="0.9"/>
<line x1="695.43" y1="585.48" x2="702.53" y2="585.48" stroke="#0a160a" stroke-width="0.9"/>
<line x1="718.05" y1="590.36" x2="718.05" y2="612.65" stroke="#474747" stroke-width="1.15"/>
<rect x="715.85" y="596.43" width="4.4" height="11.21" fill="#96fa6e" stroke="#0a160a" stroke-width="0.9"/>
<rect x="714.5" y="598.41" width="7.1" height="4.62" fill="#96fa6e" stroke="#0a160a" stroke-width="0.9"/>
<line x1="714.5" y1="601.18" x2="721.6" y2="601.18" stroke="#0a160a" stroke-width="0.9"/>
<line x1="737.12" y1="577.96" x2="737.12" y2="599.73" stroke="#474747" stroke-width="1.15"/>
<rect x="734.92" y="580.47" width="4.4" height="12.4" fill="#96fa6e" stroke="#0a160a" stroke-width="0.9"/>
<rect x="733.57" y="582.71" width="7.1" height="8.31" fill="#96fa6e" stroke="#0a160a" stroke-width="0.9"/>
<line x1="733.57" y1="587.33" x2="740.67" y2="587.33" stroke="#0a160a" stroke-width="0.9"/>
<line x1="756.19" y1="529.03" x2="756.19" y2="563.19" stroke="#474747" stroke-width="1.15"/>
<rect x="753.99" y="536.42" width="4.4" height="25.85" fill="#96fa6e" stroke="#0a160a" stroke-width="0.9"/>
<rect x="752.64" y="545.65" width="7.1" height="16.22" fill="#96fa6e" stroke="#0a160a" stroke-width="0.9"/>
<line x1="752.64" y1="554.88" x2="759.74" y2="554.88" stroke="#0a160a" stroke-width="0.9"/>
<line x1="775.26" y1="573.08" x2="775.26" y2="595.64" stroke="#474747" stroke-width="1.15"/>
<rect x="773.06" y="576.12" width="4.4" height="15.83" fill="#96fa6e" stroke="#0a160a" stroke-width="0.9"/>
<rect x="771.71" y="580.73" width="7.1" height="7.52" fill="#96fa6e" stroke="#0a160a" stroke-width="0.9"/>
<line x1="771.71" y1="584.16" x2="778.81" y2="584.16" stroke="#0a160a" stroke-width="0.9"/>
<line x1="794.33" y1="595.24" x2="794.33" y2="615.03" stroke="#474747" stroke-width="1.15"/>
<rect x="792.13" y="597.09" width="4.4" height="11.08" fill="#96fa6e" stroke="#0a160a" stroke-width="0.9"/>
<rect x="790.78" y="600.26" width="7.1" height="5.54" fill="#96fa6e" stroke="#0a160a" stroke-width="0.9"/>
<line x1="790.78" y1="603.02" x2="797.88" y2="603.02" stroke="#0a160a" stroke-width="0.9"/>
<line x1="813.4" y1="576.12" x2="813.4" y2="602.63" stroke="#474747" stroke-width="1.15"/>
<rect x="811.2" y="579.28" width="4.4" height="17.15" fill="#96fa6e" stroke="#0a160a" stroke-width="0.9"/>
<rect x="809.85" y="584.56" width="7.1" height="7.39" fill="#96fa6e" stroke="#0a160a" stroke-width="0.9"/>
<line x1="809.85" y1="587.33" x2="816.95" y2="587.33" stroke="#0a160a" stroke-width="0.9"/>
<polyline points="50.6,593.79 69.67,536.42 88.74,607.91 107.81,616.87 126.88,597.09 145.95,539.71 165.02,603.68 184.09,617.8 203.16,600.26 222.23,570.58 241.3,605.79 260.37,615.03 279.44,596.56 298.51,565.04 317.58,611.86 336.65,619.25 355.72,602.1 374.79,565.04 393.86,606.32 412.93,611.86 432,600.26 451.07,557.65 470.14,603.95 489.21,609.49 508.28,591.02 527.35,547.1 546.42,589.18 565.49,607.11 584.56,591.02 603.63,545.65 622.7,585.48 641.77,611.33 660.84,589.18 679.91,551.58 698.98,586.67 718.05,597.09 737.12,586.41 756.19,564.51 775.26,587.86 794.33,603.95 813.4,596.43" fill="none" stroke="#d0242e" stroke-width="1.45" stroke-linejoin="round"/>
<polyline points="50.6,593.79 69.67,537.34 88.74,608.17 107.81,617.8 126.88,597.09 145.95,543.8 165.02,603.95 184.09,616.87 203.16,597.88 222.23,565.04 241.3,604.48 260.37,614.1 279.44,596.56 298.51,553.03 317.58,607.64 336.65,617.8 355.72,599.33 374.79,563.19 393.86,606.32 412.93,611.33 432,596.56 451.07,574.27 470.14,604.87 489.21,613.18 508.28,591.95 527.35,552.11 546.42,593.79 565.49,608.56 584.56,591.55 603.63,550.26 622.7,587.33 641.77,604.87 660.84,589.18 679.91,553.43 698.98,586.67 718.05,599.33 737.12,586.41 756.19,553.03 775.26,586.01 794.33,600.26 813.4,589.18" fill="none" stroke="#2222c4" stroke-width="1.45" stroke-linejoin="round"/>
</g>
<rect x="41" y="521.5" width="782" height="115.1" fill="none" stroke="#000" stroke-width="1.35"/>
<line x1="36.2" y1="636" x2="41" y2="636" stroke="#000" stroke-width="1.15"/>
<text x="30.9" y="640.6" font-size="11.6" text-anchor="end" fill="#111" stroke="#111" stroke-width="0.1" textLength="13.6" lengthAdjust="spacingAndGlyphs">18</text>
<line x1="36.2" y1="609.62" x2="41" y2="609.62" stroke="#000" stroke-width="1.15"/>
<text x="30.9" y="614.22" font-size="11.6" text-anchor="end" fill="#111" stroke="#111" stroke-width="0.1" textLength="13.6" lengthAdjust="spacingAndGlyphs">20</text>
<line x1="36.2" y1="583.24" x2="41" y2="583.24" stroke="#000" stroke-width="1.15"/>
<text x="30.9" y="587.84" font-size="11.6" text-anchor="end" fill="#111" stroke="#111" stroke-width="0.1" textLength="13.6" lengthAdjust="spacingAndGlyphs">22</text>
<line x1="36.2" y1="556.86" x2="41" y2="556.86" stroke="#000" stroke-width="1.15"/>
<text x="30.9" y="561.46" font-size="11.6" text-anchor="end" fill="#111" stroke="#111" stroke-width="0.1" textLength="13.6" lengthAdjust="spacingAndGlyphs">24</text>
<line x1="36.2" y1="530.48" x2="41" y2="530.48" stroke="#000" stroke-width="1.15"/>
<text x="30.9" y="535.08" font-size="11.6" text-anchor="end" fill="#111" stroke="#111" stroke-width="0.1" textLength="13.6" lengthAdjust="spacingAndGlyphs">26</text>
<line x1="50.6" y1="636.6" x2="50.6" y2="641.4" stroke="#000" stroke-width="1.15"/>
<line x1="126.88" y1="636.6" x2="126.88" y2="641.4" stroke="#000" stroke-width="1.15"/>
<line x1="203.16" y1="636.6" x2="203.16" y2="641.4" stroke="#000" stroke-width="1.15"/>
<line x1="279.44" y1="636.6" x2="279.44" y2="641.4" stroke="#000" stroke-width="1.15"/>
<line x1="355.72" y1="636.6" x2="355.72" y2="641.4" stroke="#000" stroke-width="1.15"/>
<line x1="432" y1="636.6" x2="432" y2="641.4" stroke="#000" stroke-width="1.15"/>
<line x1="508.28" y1="636.6" x2="508.28" y2="641.4" stroke="#000" stroke-width="1.15"/>
<line x1="584.56" y1="636.6" x2="584.56" y2="641.4" stroke="#000" stroke-width="1.15"/>
<line x1="660.84" y1="636.6" x2="660.84" y2="641.4" stroke="#000" stroke-width="1.15"/>
<line x1="737.12" y1="636.6" x2="737.12" y2="641.4" stroke="#000" stroke-width="1.15"/>
<line x1="813.4" y1="636.6" x2="813.4" y2="641.4" stroke="#000" stroke-width="1.15"/>
<text x="50.6" y="654.6" font-size="11.5" text-anchor="middle" fill="#111" stroke="#111" stroke-width="0.1" textLength="21" lengthAdjust="spacingAndGlyphs">00Z</text>
<text x="50.6" y="666.6" font-size="11.5" text-anchor="middle" fill="#111" stroke="#111" stroke-width="0.1">14Feb</text>
<text x="126.88" y="654.6" font-size="11.5" text-anchor="middle" fill="#111" stroke="#111" stroke-width="0.1" textLength="21" lengthAdjust="spacingAndGlyphs">00Z</text>
<text x="126.88" y="666.6" font-size="11.5" text-anchor="middle" fill="#111" stroke="#111" stroke-width="0.1">15Feb</text>
<text x="203.16" y="654.6" font-size="11.5" text-anchor="middle" fill="#111" stroke="#111" stroke-width="0.1" textLength="21" lengthAdjust="spacingAndGlyphs">00Z</text>
<text x="203.16" y="666.6" font-size="11.5" text-anchor="middle" fill="#111" stroke="#111" stroke-width="0.1">16Feb</text>
<text x="279.44" y="654.6" font-size="11.5" text-anchor="middle" fill="#111" stroke="#111" stroke-width="0.1" textLength="21" lengthAdjust="spacingAndGlyphs">00Z</text>
<text x="279.44" y="666.6" font-size="11.5" text-anchor="middle" fill="#111" stroke="#111" stroke-width="0.1">17Feb</text>
<text x="355.72" y="654.6" font-size="11.5" text-anchor="middle" fill="#111" stroke="#111" stroke-width="0.1" textLength="21" lengthAdjust="spacingAndGlyphs">00Z</text>
<text x="355.72" y="666.6" font-size="11.5" text-anchor="middle" fill="#111" stroke="#111" stroke-width="0.1">18Feb</text>
<text x="432" y="654.6" font-size="11.5" text-anchor="middle" fill="#111" stroke="#111" stroke-width="0.1" textLength="21" lengthAdjust="spacingAndGlyphs">00Z</text>
<text x="432" y="666.6" font-size="11.5" text-anchor="middle" fill="#111" stroke="#111" stroke-width="0.1">19Feb</text>
<text x="508.28" y="654.6" font-size="11.5" text-anchor="middle" fill="#111" stroke="#111" stroke-width="0.1" textLength="21" lengthAdjust="spacingAndGlyphs">00Z</text>
<text x="508.28" y="666.6" font-size="11.5" text-anchor="middle" fill="#111" stroke="#111" stroke-width="0.1">20Feb</text>
<text x="584.56" y="654.6" font-size="11.5" text-anchor="middle" fill="#111" stroke="#111" stroke-width="0.1" textLength="21" lengthAdjust="spacingAndGlyphs">00Z</text>
<text x="584.56" y="666.6" font-size="11.5" text-anchor="middle" fill="#111" stroke="#111" stroke-width="0.1">21Feb</text>
<text x="660.84" y="654.6" font-size="11.5" text-anchor="middle" fill="#111" stroke="#111" stroke-width="0.1" textLength="21" lengthAdjust="spacingAndGlyphs">00Z</text>
<text x="660.84" y="666.6" font-size="11.5" text-anchor="middle" fill="#111" stroke="#111" stroke-width="0.1">22Feb</text>
<text x="737.12" y="654.6" font-size="11.5" text-anchor="middle" fill="#111" stroke="#111" stroke-width="0.1" textLength="21" lengthAdjust="spacingAndGlyphs">00Z</text>
<text x="737.12" y="666.6" font-size="11.5" text-anchor="middle" fill="#111" stroke="#111" stroke-width="0.1">23Feb</text>
<text x="813.4" y="654.6" font-size="11.5" text-anchor="middle" fill="#111" stroke="#111" stroke-width="0.1" textLength="21" lengthAdjust="spacingAndGlyphs">00Z</text>
<text x="813.4" y="666.6" font-size="11.5" text-anchor="middle" fill="#111" stroke="#111" stroke-width="0.1">24Feb</text>
</svg>
</body></html>
